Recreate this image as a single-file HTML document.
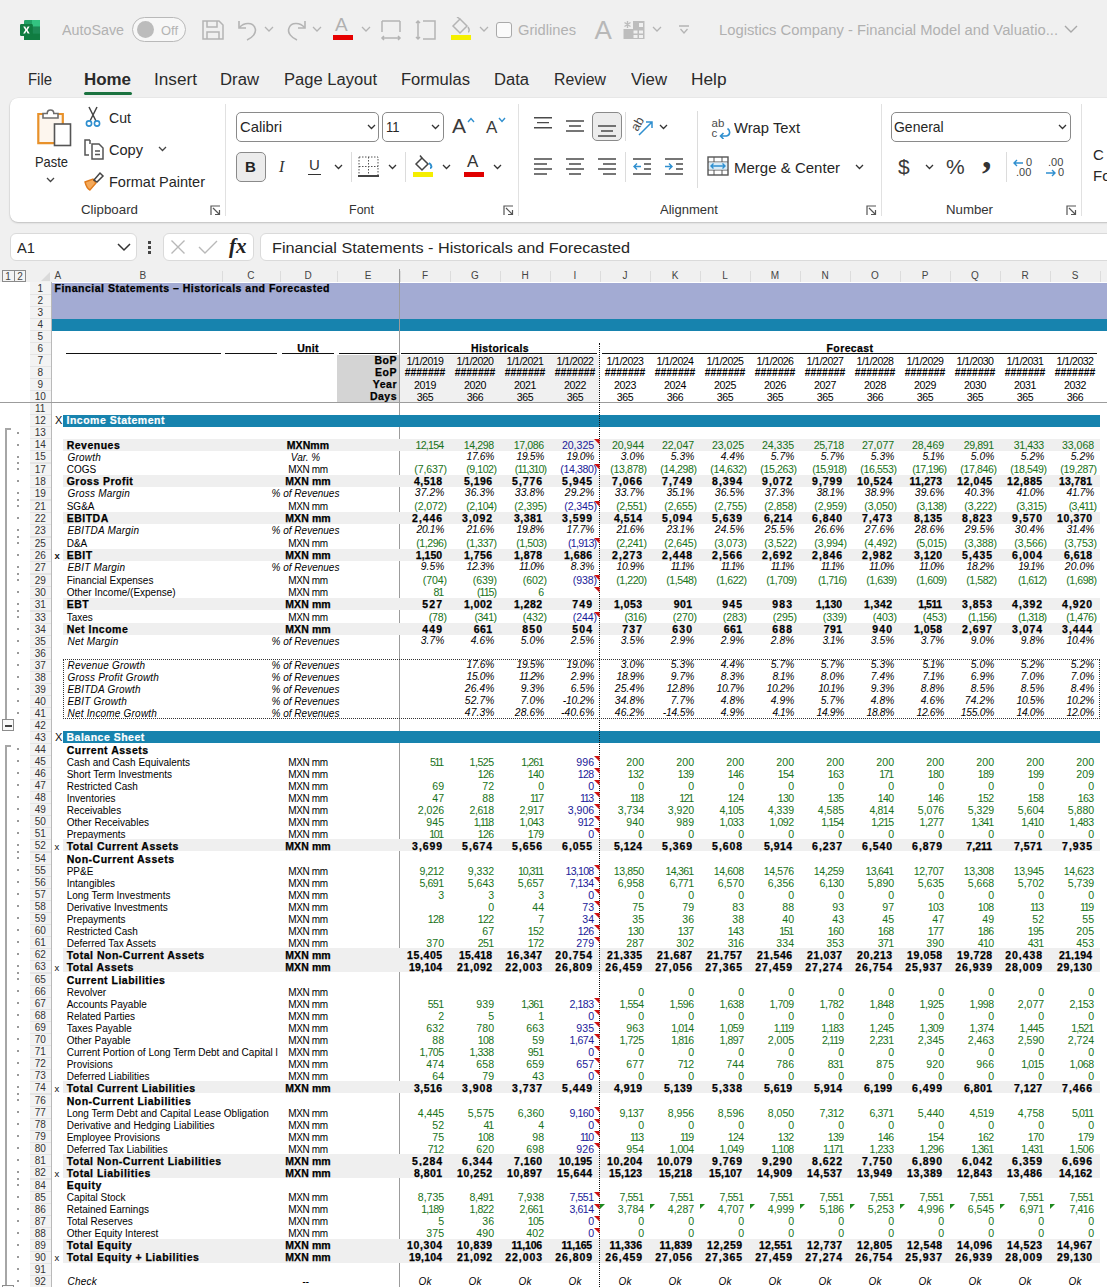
<!DOCTYPE html><html><head><meta charset="utf-8"><style>
html,body{margin:0;padding:0}body{width:1107px;height:1287px;overflow:hidden;position:relative;background:#f0f0f0;font-family:"Liberation Sans",sans-serif}
div,span{box-sizing:border-box}
.x{position:absolute;white-space:nowrap}
.q{position:absolute}
.w{position:absolute;left:0;width:1107px;height:12px}
.w>span{position:absolute;top:0;height:12px;line-height:12px;white-space:nowrap;font-size:9.6px;color:#000}
.w>.R{text-align:right;font-size:10.6px;top:-.5px}
.w>.N{text-align:right;font-size:10.6px;top:-.5px}
.w>.B{text-align:right;font-weight:700;font-size:10.5px;top:-.5px;-webkit-text-stroke:.25px #000}
.w>.I{text-align:right;font-style:italic;font-size:10.3px;top:-.5px}
.w>.C{width:50px;text-align:center;font-style:italic;font-size:10px}
.w>.L{left:66.7px;font-size:10px;top:.5px}
.w>.LB{left:66.7px;font-size:10.5px;font-weight:700;letter-spacing:.5px;top:-.5px;-webkit-text-stroke:.25px #000}
.w>.LI{left:67.5px;font-size:10px;font-style:italic;letter-spacing:.2px;top:.5px}
.w>.U{left:258px;width:100px;text-align:center;font-size:10px;letter-spacing:-.4px;top:.5px}
.w>.UB{left:258px;width:100px;text-align:center;font-size:10.5px;font-weight:700;letter-spacing:.1px;top:-.5px;-webkit-text-stroke:.25px #000}
.w>.UI{left:255.5px;width:100px;text-align:center;font-size:10px;font-style:italic;top:.5px}
.w>.H{left:29.5px;width:21.5px;text-align:center;font-size:10px;color:#333}
.g{color:#187218!important}.u{color:#1a1a98!important}
</style></head><body>
<!-- title bar -->
<svg style="position:absolute;left:18px;top:18px" width="24" height="24" viewBox="0 0 24 24">
 <rect x="6" y="2" width="16" height="20" rx="1.2" fill="#21a366"/>
 <rect x="14" y="2" width="8" height="6.5" fill="#33c481"/>
 <rect x="6" y="15.5" width="16" height="6.5" fill="#107c41"/>
 <rect x="14" y="8.5" width="8" height="7" fill="#185c37" opacity="0.35"/>
 <rect x="2" y="6" width="12.8" height="12" rx="1.2" fill="#107c41"/>
 <path d="M5.2 8.6 L7.2 8.6 L8.4 10.9 L9.7 8.6 L11.6 8.6 L9.5 12 L11.7 15.4 L9.7 15.4 L8.4 13.1 L7.1 15.4 L5.1 15.4 L7.3 12 Z" fill="#fff"/>
</svg>
<div style="position:absolute;left:132px;top:17px;width:54px;height:25px;border:1.3px solid #b9b9b9;border-radius:13px;background:#f7f7f7"></div>
<div style="position:absolute;left:136.5px;top:21.3px;width:17px;height:17px;border-radius:50%;background:#bcbcbc"></div>
<svg style="position:absolute;left:200px;top:18px" width="26" height="24" viewBox="0 0 26 24" fill="none" stroke="#b4b4b4" stroke-width="1.5">
 <path d="M3 3 H19 L23 7 V21 H3 Z"/><path d="M7 3 V9 H17 V3"/><path d="M7 21 V14 H19 V21"/>
</svg>
<svg style="position:absolute;left:236px;top:17px" width="24" height="26" viewBox="0 0 24 26" fill="none" stroke="#b4b4b4" stroke-width="1.6">
 <path d="M3 4 V11 H10"/><path d="M3.5 10.5 C8 5 17 5 19 11 C21 16 16 21 11 23"/>
</svg>
<svg style="position:absolute;left:264px;top:26px" width="10" height="7" fill="none" stroke="#b4b4b4" stroke-width="1.3"><path d="M1 1 L5 5 L9 1"/></svg>
<svg style="position:absolute;left:284px;top:17px" width="24" height="26" viewBox="0 0 24 26" fill="none" stroke="#b4b4b4" stroke-width="1.6">
 <path d="M21 4 V11 H14"/><path d="M20.5 10.5 C16 5 7 5 5 11 C3 16 8 21 13 23"/>
</svg>
<svg style="position:absolute;left:312px;top:26px" width="10" height="7" fill="none" stroke="#b4b4b4" stroke-width="1.3"><path d="M1 1 L5 5 L9 1"/></svg>
<div style="position:absolute;left:333px;top:35px;width:20px;height:5px;background:#e60000"></div>
<svg style="position:absolute;left:361px;top:26px" width="10" height="7" fill="none" stroke="#b4b4b4" stroke-width="1.3"><path d="M1 1 L5 5 L9 1"/></svg>
<svg style="position:absolute;left:380px;top:19px" width="22" height="22" viewBox="0 0 22 22" fill="none" stroke="#b4b4b4" stroke-width="1.5">
 <path d="M2 2 H20 M2 2 V13 M20 2 V13"/><path d="M2 19 H20 M4 17 L2 19 L4 21 M18 17 L20 19 L18 21"/>
</svg>
<svg style="position:absolute;left:415px;top:19px" width="22" height="22" viewBox="0 0 22 22" fill="none" stroke="#b4b4b4" stroke-width="1.5">
 <path d="M8 2 H20 V20 H8"/><path d="M3 2 V20 M1 4 L3 2 L5 4 M1 18 L3 20 L5 18"/>
</svg>
<svg style="position:absolute;left:449px;top:17px" width="24" height="18" viewBox="0 0 24 18" fill="none" stroke="#b4b4b4" stroke-width="1.5">
 <path d="M4 9 L11 2 L18 9 L11 16 Z"/><path d="M11 2 L8 0"/><path d="M19 10 C21 13 20 15 19 15"/>
</svg>
<div style="position:absolute;left:451px;top:35px;width:20px;height:5px;background:#f5f000"></div>
<svg style="position:absolute;left:479px;top:26px" width="10" height="7" fill="none" stroke="#b4b4b4" stroke-width="1.3"><path d="M1 1 L5 5 L9 1"/></svg>
<div style="position:absolute;left:496px;top:22px;width:16px;height:16px;border:1.3px solid #a9a9a9;border-radius:3px;background:#fafafa"></div>
<svg style="position:absolute;left:623px;top:20px" width="22" height="20" viewBox="0 0 22 20">
 <rect x="0.5" y="9" width="21" height="10" fill="#bdbdbd"/><rect x="10" y="1" width="11.5" height="8" fill="#bdbdbd"/>
 <rect x="10.5" y="10.5" width="4" height="3" fill="#f0f0f0"/><rect x="16" y="10.5" width="4" height="3" fill="#f0f0f0"/>
 <rect x="10.5" y="15" width="4" height="3" fill="#f0f0f0"/><rect x="16" y="15" width="4" height="3" fill="#f0f0f0"/>
 <rect x="16" y="3" width="4" height="4" fill="#f0f0f0"/>
 <path d="M4.5 1 V8 M1.5 2.5 L7.5 6.5 M7.5 2.5 L1.5 6.5" stroke="#bdbdbd" stroke-width="1.4"/>
</svg>
<svg style="position:absolute;left:652px;top:26px" width="10" height="7" fill="none" stroke="#b4b4b4" stroke-width="1.3"><path d="M1 1 L5 5 L9 1"/></svg>
<svg style="position:absolute;left:678px;top:25px" width="12" height="10" fill="none" stroke="#b4b4b4" stroke-width="1.3"><path d="M1 1 H11 M2.5 4 L6 8 L9.5 4"/></svg>
<svg style="position:absolute;left:1064px;top:25px" width="14" height="9" fill="none" stroke="#a8a8a8" stroke-width="1.4"><path d="M1 1 L7 7 L13 1"/></svg>

<!-- tabs -->
<div style="position:absolute;left:84px;top:92px;width:48px;height:3px;border-radius:2px;background:#1b7340"></div>

<!-- ribbon panel -->
<div style="position:absolute;left:10px;top:98px;width:1120px;height:124px;background:#fff;border-radius:8px;box-shadow:0 1px 2px rgba(0,0,0,0.18), 0 0 0 0.6px rgba(0,0,0,0.06)"></div>
<!-- clipboard group -->
<svg style="position:absolute;left:34px;top:106px" width="40" height="42" viewBox="0 0 40 42">
 <rect x="4.5" y="8" width="24.5" height="29.5" fill="#fdf6ee"/>
 <path d="M9 8 H4.3 V37.2 H20" fill="none" stroke="#e8912a" stroke-width="2.2"/>
 <path d="M24 8 H28.8 V18" fill="none" stroke="#e8912a" stroke-width="2.2"/>
 <path d="M9 12 V7.5 H13.2 C13.2 2.8 19.8 2.8 19.8 7.5 H24 V12 Z" fill="#fff" stroke="#6d6d6d" stroke-width="1.6"/>
 <rect x="20.5" y="18" width="16" height="21.5" fill="#fff" stroke="#555" stroke-width="1.6"/>
</svg>
<svg style="position:absolute;left:46px;top:177px" width="9" height="6" fill="none" stroke="#444" stroke-width="1.3"><path d="M1 1 L4.5 4.5 L8 1"/></svg>
<svg style="position:absolute;left:84px;top:106px" width="18" height="22" viewBox="0 0 18 22" fill="none">
 <path d="M5 1 L12 15 M13 1 L6 15" stroke="#444" stroke-width="1.5"/>
 <circle cx="5" cy="17.5" r="2.6" stroke="#2f8fcf" stroke-width="1.6"/><circle cx="13" cy="17.5" r="2.6" stroke="#2f8fcf" stroke-width="1.6"/>
</svg>
<svg style="position:absolute;left:83px;top:138px" width="22" height="22" viewBox="0 0 22 22" fill="none" stroke="#555" stroke-width="1.5">
 <path d="M7 2 H2 V17 H6"/><path d="M7 2 V6"/><path d="M9 6 H16 L20 10 V21 H9 Z"/><path d="M12 13 H17 M12 16.5 H17"/>
</svg>
<svg style="position:absolute;left:158px;top:146px" width="9" height="6" fill="none" stroke="#444" stroke-width="1.3"><path d="M1 1 L4.5 4.5 L8 1"/></svg>
<svg style="position:absolute;left:83px;top:170px" width="22" height="22" viewBox="0 0 22 22">
 <path d="M2 12 L10 9 L13 13 L7 20 C5 19 3 16 2 12 Z" fill="#f4a95a" stroke="#e07a1a" stroke-width="1.4"/>
 <path d="M11 10 L17 3 L20 6 L14 12 Z" fill="none" stroke="#444" stroke-width="1.5"/>
</svg>
<svg style="position:absolute;left:210px;top:205px" width="11" height="11" fill="none" stroke="#555" stroke-width="1.2"><path d="M1 10 V1 H10 M3 3 L9.5 9.5 M5 9.5 H9.5 V5"/></svg>
<div style="position:absolute;left:225px;top:104px;width:1px;height:112px;background:#e1e1e1"></div>

<!-- font group -->
<div style="position:absolute;left:236px;top:112px;width:143px;height:30px;border:1px solid #8a8a8a;border-radius:5px;background:#fff"></div>
<svg style="position:absolute;left:367px;top:124px" width="9" height="6" fill="none" stroke="#333" stroke-width="1.3"><path d="M1 1 L4.5 4.5 L8 1"/></svg>
<div style="position:absolute;left:382px;top:112px;width:62px;height:30px;border:1px solid #8a8a8a;border-radius:5px;background:#fff"></div>
<svg style="position:absolute;left:431px;top:124px" width="9" height="6" fill="none" stroke="#333" stroke-width="1.3"><path d="M1 1 L4.5 4.5 L8 1"/></svg>
<svg style="position:absolute;left:467px;top:117px" width="8" height="6" fill="none" stroke="#2f8fcf" stroke-width="1.4"><path d="M1 5 L4 1.5 L7 5"/></svg>
<svg style="position:absolute;left:498px;top:117px" width="8" height="6" fill="none" stroke="#2f8fcf" stroke-width="1.4"><path d="M1 1 L4 4.5 L7 1"/></svg>

<div style="position:absolute;left:236px;top:152px;width:30px;height:30px;border:1px solid #8a8a8a;border-radius:5px;background:#ececec"></div>
<div style="position:absolute;left:308px;top:174px;width:13px;height:1.3px;background:#333"></div>
<svg style="position:absolute;left:334px;top:164px" width="9" height="6" fill="none" stroke="#333" stroke-width="1.3"><path d="M1 1 L4.5 4.5 L8 1"/></svg>
<div style="position:absolute;left:351px;top:152px;width:1px;height:30px;background:#dcdcdc"></div>
<svg style="position:absolute;left:358px;top:156px" width="21" height="21" viewBox="0 0 21 21" fill="none" stroke="#555" stroke-width="1" stroke-dasharray="1.5 1.5">
 <path d="M1 1 H20 V20 M1 1 V20 M10.5 1 V20 M1 10.5 H20"/>
</svg>
<div style="position:absolute;left:358px;top:175px;width:21px;height:2px;background:#444"></div>
<svg style="position:absolute;left:388px;top:164px" width="9" height="6" fill="none" stroke="#333" stroke-width="1.3"><path d="M1 1 L4.5 4.5 L8 1"/></svg>
<div style="position:absolute;left:405px;top:152px;width:1px;height:30px;background:#dcdcdc"></div>
<svg style="position:absolute;left:413px;top:155px" width="22" height="18" viewBox="0 0 22 18" fill="none" stroke="#444" stroke-width="1.5">
 <path d="M3 9 L9 3 L15 9 L9 15 Z"/><path d="M9 3 L7 0.5"/><path d="M16 8 C19 10 19 13 17 13" stroke="#2f8fcf" stroke-width="2"/>
</svg>
<div style="position:absolute;left:413px;top:172px;width:20px;height:5px;background:#f5ee00"></div>
<svg style="position:absolute;left:442px;top:164px" width="9" height="6" fill="none" stroke="#333" stroke-width="1.3"><path d="M1 1 L4.5 4.5 L8 1"/></svg>
<div style="position:absolute;left:464px;top:172px;width:20px;height:5px;background:#e00000"></div>
<svg style="position:absolute;left:493px;top:164px" width="9" height="6" fill="none" stroke="#333" stroke-width="1.3"><path d="M1 1 L4.5 4.5 L8 1"/></svg>
<svg style="position:absolute;left:503px;top:205px" width="11" height="11" fill="none" stroke="#555" stroke-width="1.2"><path d="M1 10 V1 H10 M3 3 L9.5 9.5 M5 9.5 H9.5 V5"/></svg>
<div style="position:absolute;left:518px;top:104px;width:1px;height:112px;background:#e1e1e1"></div>

<!-- alignment group -->
<svg style="position:absolute;left:533px;top:116px" width="20" height="14" fill="none" stroke="#4a4a4a" stroke-width="1.4"><path d="M1 1.7 H19 M4 6.6 H16 M1 11.7 H19"/></svg>
<svg style="position:absolute;left:565px;top:120px" width="20" height="14" fill="none" stroke="#4a4a4a" stroke-width="1.4"><path d="M1 1 H19 M4 6 H16 M1 11 H19"/></svg>
<div style="position:absolute;left:592px;top:112px;width:30px;height:29px;border:1px solid #8a8a8a;border-radius:5px;background:#ececec"></div>
<svg style="position:absolute;left:597px;top:125px" width="20" height="14" fill="none" stroke="#4a4a4a" stroke-width="1.4"><path d="M1 1 H19 M4 6 H16 M1 11 H19"/></svg>
<div style="position:absolute;left:624.5px;top:112px;width:1px;height:29px;background:#dcdcdc"></div>
<svg style="position:absolute;left:630px;top:112px" width="26" height="26" viewBox="0 0 26 26" fill="none">
 <text x="0" y="0" font-size="12.5" fill="#444" font-family="Liberation Sans" transform="translate(7.5 20) rotate(-60)">ab</text>
 <path d="M9 23 L22 10 M16 10 H22 V16" stroke="#2f8fcf" stroke-width="1.5"/>
</svg>
<svg style="position:absolute;left:659px;top:124px" width="9" height="6" fill="none" stroke="#333" stroke-width="1.3"><path d="M1 1 L4.5 4.5 L8 1"/></svg>
<svg style="position:absolute;left:533px;top:158px" width="20" height="18" fill="none" stroke="#4a4a4a" stroke-width="1.4"><path d="M1 1 H19 M1 6 H14 M1 11 H19 M1 16 H14"/></svg>
<svg style="position:absolute;left:565px;top:158px" width="20" height="18" fill="none" stroke="#4a4a4a" stroke-width="1.4"><path d="M1 1 H19 M4 6 H16 M1 11 H19 M4 16 H16"/></svg>
<svg style="position:absolute;left:597px;top:158px" width="20" height="18" fill="none" stroke="#4a4a4a" stroke-width="1.4"><path d="M1 1 H19 M6 6 H19 M1 11 H19 M6 16 H19"/></svg>
<div style="position:absolute;left:624.5px;top:152px;width:1px;height:30px;background:#dcdcdc"></div>
<svg style="position:absolute;left:632px;top:158px" width="20" height="18" fill="none" stroke="#4a4a4a" stroke-width="1.4"><path d="M1 1 H19 M12 6 H19 M12 11 H19 M1 16 H19"/><path d="M9 8.5 H2 M5 5.5 L2 8.5 L5 11.5" stroke="#2f8fcf"/></svg>
<svg style="position:absolute;left:664px;top:158px" width="20" height="18" fill="none" stroke="#4a4a4a" stroke-width="1.4"><path d="M1 1 H19 M12 6 H19 M12 11 H19 M1 16 H19"/><path d="M1 8.5 H8 M5 5.5 L8 8.5 L5 11.5" stroke="#2f8fcf"/></svg>
<div style="position:absolute;left:696.5px;top:111px;width:1px;height:77px;background:#dcdcdc"></div>
<svg style="position:absolute;left:709px;top:115px" width="24" height="24" viewBox="0 0 24 24" fill="none">
 <text x="2.5" y="12" font-size="11.5" fill="#4a4a4a" font-family="Liberation Sans">ab</text>
 <text x="2.5" y="21.5" font-size="11.5" fill="#4a4a4a" font-family="Liberation Sans">c</text>
 <path d="M18.5 13.5 C21.5 15.5 21.5 20 17.5 21 H11.5 M14.5 18 L11.5 21 L14.5 24" stroke="#2f8fcf" stroke-width="1.6"/>
</svg>
<svg style="position:absolute;left:707px;top:156px" width="22" height="20" viewBox="0 0 22 20" fill="none">
 <rect x="1" y="1" width="20" height="18" stroke="#555" stroke-width="1.4"/>
 <path d="M1 6 H21 M1 14 H21 M7 1 V6 M15 1 V6 M7 14 V19 M15 14 V19" stroke="#555" stroke-width="1"/>
 <rect x="2" y="6.5" width="18" height="7" fill="#d9ecf8"/>
 <path d="M4 10 H18 M6.5 7.5 L4 10 L6.5 12.5 M15.5 7.5 L18 10 L15.5 12.5" stroke="#2f8fcf" stroke-width="1.4"/>
</svg>
<svg style="position:absolute;left:855px;top:164px" width="9" height="6" fill="none" stroke="#333" stroke-width="1.3"><path d="M1 1 L4.5 4.5 L8 1"/></svg>
<svg style="position:absolute;left:866px;top:205px" width="11" height="11" fill="none" stroke="#555" stroke-width="1.2"><path d="M1 10 V1 H10 M3 3 L9.5 9.5 M5 9.5 H9.5 V5"/></svg>
<div style="position:absolute;left:881px;top:104px;width:1px;height:112px;background:#e1e1e1"></div>

<!-- number group -->
<div style="position:absolute;left:891px;top:112px;width:180px;height:30px;border:1px solid #8a8a8a;border-radius:5px;background:#fff"></div>
<svg style="position:absolute;left:1058px;top:124px" width="9" height="6" fill="none" stroke="#333" stroke-width="1.3"><path d="M1 1 L4.5 4.5 L8 1"/></svg>
<svg style="position:absolute;left:925px;top:164px" width="9" height="6" fill="none" stroke="#333" stroke-width="1.3"><path d="M1 1 L4.5 4.5 L8 1"/></svg>
<div style="position:absolute;left:1006px;top:152px;width:1px;height:30px;background:#dcdcdc"></div>
<svg style="position:absolute;left:1013px;top:159px" width="11" height="8" fill="none" stroke="#2f8fcf" stroke-width="1.4"><path d="M10 4 H1 M4 1 L1 4 L4 7"/></svg>
<svg style="position:absolute;left:1045px;top:169px" width="11" height="8" fill="none" stroke="#2f8fcf" stroke-width="1.4"><path d="M1 4 H10 M7 1 L10 4 L7 7"/></svg>
<svg style="position:absolute;left:1066px;top:205px" width="11" height="11" fill="none" stroke="#555" stroke-width="1.2"><path d="M1 10 V1 H10 M3 3 L9.5 9.5 M5 9.5 H9.5 V5"/></svg>
<div style="position:absolute;left:1081px;top:104px;width:1px;height:112px;background:#e1e1e1"></div>

<!-- formula bar -->
<div style="position:absolute;left:10px;top:232.5px;width:126.5px;height:28.5px;border:1px solid #dadada;border-radius:6px;background:#fff"></div>
<svg style="position:absolute;left:117px;top:243px" width="14" height="9" fill="none" stroke="#333" stroke-width="1.5"><path d="M1 1 L7 7 L13 1"/></svg>
<div style="position:absolute;left:148px;top:241px;width:2.5px;height:2.5px;background:#444"></div>
<div style="position:absolute;left:148px;top:246px;width:2.5px;height:2.5px;background:#444"></div>
<div style="position:absolute;left:148px;top:251px;width:2.5px;height:2.5px;background:#444"></div>
<div style="position:absolute;left:162.5px;top:232.5px;width:91px;height:28.5px;border:1px solid #dadada;border-radius:6px;background:#fff"></div>
<svg style="position:absolute;left:170px;top:239px" width="16" height="16" fill="none" stroke="#b8b8b8" stroke-width="1.4"><path d="M1.5 1.5 L14.5 14.5 M14.5 1.5 L1.5 14.5"/></svg>
<svg style="position:absolute;left:198px;top:239px" width="20" height="16" fill="none" stroke="#b8b8b8" stroke-width="1.4"><path d="M1 8 L7 14 L19 2"/></svg>
<div style="position:absolute;left:260px;top:232.5px;width:860px;height:28.5px;border:1px solid #dadada;border-radius:6px;background:#fff"></div>

<div class="x" style="left:62px;top:20px;font-size:15.5px;line-height:20px;color:#b2b2b2;transform-origin:0 0;transform:scaleX(0.9224);">AutoSave</div>
<div class="x" style="left:160.8px;top:21px;font-size:13px;line-height:20px;color:#b4b4b4;transform-origin:0 0;transform:scaleX(0.9936);">Off</div>
<div class="x" style="left:518px;top:20px;font-size:15.5px;line-height:20px;color:#b2b2b2;transform-origin:0 0;transform:scaleX(0.9481);">Gridlines</div>
<div class="x" style="left:719px;top:20px;font-size:15.5px;line-height:20px;color:#b0b0b0;transform-origin:0 0;transform:scaleX(0.9535);">Logistics Company - Financial Model and Valuatio...</div>
<div class="x" style="left:27.5px;top:70px;font-size:16px;line-height:20px;color:#2a2a2a;transform-origin:0 0;transform:scaleX(0.9309);">File</div>
<div class="x" style="left:84px;top:70px;font-size:16px;line-height:20px;color:#2a2a2a;font-weight:700;transform-origin:0 0;transform:scaleX(1.0573);">Home</div>
<div class="x" style="left:154px;top:70px;font-size:16px;line-height:20px;color:#2a2a2a;transform-origin:0 0;transform:scaleX(1.0746);">Insert</div>
<div class="x" style="left:220px;top:70px;font-size:16px;line-height:20px;color:#2a2a2a;transform-origin:0 0;transform:scaleX(1.0444);">Draw</div>
<div class="x" style="left:284px;top:70px;font-size:16px;line-height:20px;color:#2a2a2a;transform-origin:0 0;transform:scaleX(1.0350);">Page Layout</div>
<div class="x" style="left:401px;top:70px;font-size:16px;line-height:20px;color:#2a2a2a;transform-origin:0 0;transform:scaleX(1.0347);">Formulas</div>
<div class="x" style="left:494px;top:70px;font-size:16px;line-height:20px;color:#2a2a2a;transform-origin:0 0;transform:scaleX(1.0356);">Data</div>
<div class="x" style="left:554px;top:70px;font-size:16px;line-height:20px;color:#2a2a2a;transform-origin:0 0;transform:scaleX(0.9911);">Review</div>
<div class="x" style="left:631px;top:70px;font-size:16px;line-height:20px;color:#2a2a2a;transform-origin:0 0;transform:scaleX(1.0468);">View</div>
<div class="x" style="left:691px;top:70px;font-size:16px;line-height:20px;color:#2a2a2a;transform-origin:0 0;transform:scaleX(1.0788);">Help</div>
<div class="x" style="left:35px;top:152px;font-size:15px;line-height:20px;color:#262626;transform-origin:0 0;transform:scaleX(0.8603);">Paste</div>
<div class="x" style="left:109px;top:108px;font-size:15px;line-height:20px;color:#262626;transform-origin:0 0;transform:scaleX(0.9424);">Cut</div>
<div class="x" style="left:109px;top:140px;font-size:15px;line-height:20px;color:#262626;transform-origin:0 0;transform:scaleX(0.9706);">Copy</div>
<div class="x" style="left:109px;top:172px;font-size:15px;line-height:20px;color:#262626;transform-origin:0 0;transform:scaleX(0.9677);">Format Painter</div>
<div class="x" style="left:81px;top:200px;font-size:13.5px;line-height:20px;color:#333;transform-origin:0 0;transform:scaleX(0.9862);">Clipboard</div>
<div class="x" style="left:239.5px;top:117px;font-size:15px;line-height:20px;color:#262626;transform-origin:0 0;transform:scaleX(0.9879);">Calibri</div>
<div class="x" style="left:386px;top:117px;font-size:15px;line-height:20px;color:#262626;transform-origin:0 0;transform:scaleX(0.8666);">11</div>
<div class="x" style="left:349px;top:200px;font-size:13.5px;line-height:20px;color:#333;transform-origin:0 0;transform:scaleX(0.9254);">Font</div>
<div class="x" style="left:734px;top:118px;font-size:15px;line-height:20px;color:#262626;transform-origin:0 0;transform:scaleX(0.9853);">Wrap Text</div>
<div class="x" style="left:734px;top:158px;font-size:15px;line-height:20px;color:#262626;transform-origin:0 0;transform:scaleX(1.0010);">Merge &amp; Center</div>
<div class="x" style="left:660px;top:200px;font-size:13.5px;line-height:20px;color:#333;transform-origin:0 0;transform:scaleX(0.9659);">Alignment</div>
<div class="x" style="left:894.2px;top:117px;font-size:15px;line-height:20px;color:#262626;transform-origin:0 0;transform:scaleX(0.9311);">General</div>
<div class="x" style="left:946px;top:200px;font-size:13.5px;line-height:20px;color:#333;transform-origin:0 0;transform:scaleX(0.9788);">Number</div>
<div class="x" style="left:17px;top:238px;font-size:15px;line-height:20px;color:#262626;transform-origin:0 0;transform:scaleX(0.9804);">A1</div>
<div class="x" style="left:272px;top:238px;font-size:15px;line-height:20px;color:#262626;transform-origin:0 0;transform:scaleX(1.0816);">Financial Statements - Historicals and Forecasted</div>
<div class="x" style="left:1093px;top:145px;font-size:15px;line-height:20px;color:#262626;">C</div>
<div class="x" style="left:1093px;top:166px;font-size:15px;line-height:20px;color:#262626;">Fo</div>
<div class="x" style="left:335px;top:15px;font-size:19px;line-height:20px;color:#b0b0b0;">A</div>
<div class="x" style="left:594.5px;top:19.5px;font-size:26px;line-height:20px;color:#b8b8b8;">A</div>
<div class="x" style="left:452px;top:116px;font-size:21px;line-height:20px;color:#3a3a3a;">A</div>
<div class="x" style="left:486px;top:118px;font-size:17px;line-height:20px;color:#3a3a3a;">A</div>
<div class="x" style="left:245px;top:157px;font-size:15px;line-height:20px;color:#242424;font-weight:700;">B</div>
<div class="x" style="left:279px;top:157px;font-size:16px;line-height:20px;color:#333;font-family:'Liberation Serif',serif;font-style:italic;">I</div>
<div class="x" style="left:309px;top:155px;font-size:15px;line-height:20px;color:#333;">U</div>
<div class="x" style="left:467px;top:152px;font-size:17px;line-height:20px;color:#333;">A</div>
<div class="x" style="left:898px;top:157px;font-size:21px;line-height:20px;color:#3a3a3a;">$</div>
<div class="x" style="left:946px;top:157px;font-size:21px;line-height:20px;color:#3a3a3a;">%</div>
<div class="x" style="left:982px;top:140px;font-size:38px;line-height:20px;color:#333;font-weight:700;font-family:'Liberation Serif',serif;line-height:30px;">,</div>
<div class="x" style="left:1026px;top:157px;font-size:11px;line-height:20px;color:#444;line-height:10px;">0</div>
<div class="x" style="left:1016px;top:167px;font-size:11px;line-height:20px;color:#444;line-height:10px;">.00</div>
<div class="x" style="left:1048px;top:157px;font-size:11px;line-height:20px;color:#444;line-height:10px;">.00</div>
<div class="x" style="left:1058px;top:167px;font-size:11px;line-height:20px;color:#444;line-height:10px;">0</div>
<div class="x" style="left:229px;top:236px;font-size:21px;line-height:20px;color:#222;font-style:italic;font-weight:700;font-family:'Liberation Serif',serif;">fx</div>
<div class="q" style="left:0px;top:282px;width:29.5px;height:1005px;background:#ffffff"></div>
<div class="q" style="left:29.5px;top:282px;width:21.5px;height:1005px;background:#f3f3f3"></div>
<div class="q" style="left:51px;top:282px;width:1056px;height:1005px;background:#ffffff"></div>
<div class="q" style="left:50.5px;top:269px;width:1.0px;height:1018px;background:#b9b9b9"></div>
<div class="q" style="left:29.5px;top:269px;width:1077.5px;height:13px;background:#f0f0f0"></div>
<div class="x" style="left:-42.25px;top:270px;width:200px;text-align:center;line-height:12px;font-size:10px;color:#444">A</div>
<div class="x" style="left:42.75px;top:270px;width:200px;text-align:center;line-height:12px;font-size:10px;color:#444">B</div>
<div class="q" style="left:222px;top:271px;width:1px;height:11px;background:#dcdcdc"></div>
<div class="x" style="left:150.75px;top:270px;width:200px;text-align:center;line-height:12px;font-size:10px;color:#444">C</div>
<div class="q" style="left:279.5px;top:271px;width:1.0px;height:11px;background:#dcdcdc"></div>
<div class="x" style="left:208.0px;top:270px;width:200px;text-align:center;line-height:12px;font-size:10px;color:#444">D</div>
<div class="q" style="left:336.5px;top:271px;width:1.0px;height:11px;background:#dcdcdc"></div>
<div class="x" style="left:268.0px;top:270px;width:200px;text-align:center;line-height:12px;font-size:10px;color:#444">E</div>
<div class="q" style="left:399.5px;top:271px;width:1.0px;height:11px;background:#dcdcdc"></div>
<div class="x" style="left:325.0px;top:270px;width:200px;text-align:center;line-height:12px;font-size:10px;color:#444">F</div>
<div class="q" style="left:450px;top:271px;width:1px;height:11px;background:#dcdcdc"></div>
<div class="x" style="left:375.0px;top:270px;width:200px;text-align:center;line-height:12px;font-size:10px;color:#444">G</div>
<div class="q" style="left:500px;top:271px;width:1px;height:11px;background:#dcdcdc"></div>
<div class="x" style="left:425.0px;top:270px;width:200px;text-align:center;line-height:12px;font-size:10px;color:#444">H</div>
<div class="q" style="left:550px;top:271px;width:1px;height:11px;background:#dcdcdc"></div>
<div class="x" style="left:475.0px;top:270px;width:200px;text-align:center;line-height:12px;font-size:10px;color:#444">I</div>
<div class="q" style="left:600px;top:271px;width:1px;height:11px;background:#dcdcdc"></div>
<div class="x" style="left:525.0px;top:270px;width:200px;text-align:center;line-height:12px;font-size:10px;color:#444">J</div>
<div class="q" style="left:650px;top:271px;width:1px;height:11px;background:#dcdcdc"></div>
<div class="x" style="left:575.0px;top:270px;width:200px;text-align:center;line-height:12px;font-size:10px;color:#444">K</div>
<div class="q" style="left:700px;top:271px;width:1px;height:11px;background:#dcdcdc"></div>
<div class="x" style="left:625.0px;top:270px;width:200px;text-align:center;line-height:12px;font-size:10px;color:#444">L</div>
<div class="q" style="left:750px;top:271px;width:1px;height:11px;background:#dcdcdc"></div>
<div class="x" style="left:675.0px;top:270px;width:200px;text-align:center;line-height:12px;font-size:10px;color:#444">M</div>
<div class="q" style="left:800px;top:271px;width:1px;height:11px;background:#dcdcdc"></div>
<div class="x" style="left:725.0px;top:270px;width:200px;text-align:center;line-height:12px;font-size:10px;color:#444">N</div>
<div class="q" style="left:850px;top:271px;width:1px;height:11px;background:#dcdcdc"></div>
<div class="x" style="left:775.0px;top:270px;width:200px;text-align:center;line-height:12px;font-size:10px;color:#444">O</div>
<div class="q" style="left:900px;top:271px;width:1px;height:11px;background:#dcdcdc"></div>
<div class="x" style="left:825.0px;top:270px;width:200px;text-align:center;line-height:12px;font-size:10px;color:#444">P</div>
<div class="q" style="left:950px;top:271px;width:1px;height:11px;background:#dcdcdc"></div>
<div class="x" style="left:875.0px;top:270px;width:200px;text-align:center;line-height:12px;font-size:10px;color:#444">Q</div>
<div class="q" style="left:1000px;top:271px;width:1px;height:11px;background:#dcdcdc"></div>
<div class="x" style="left:925.0px;top:270px;width:200px;text-align:center;line-height:12px;font-size:10px;color:#444">R</div>
<div class="q" style="left:1050px;top:271px;width:1px;height:11px;background:#dcdcdc"></div>
<div class="x" style="left:975.0px;top:270px;width:200px;text-align:center;line-height:12px;font-size:10px;color:#444">S</div>
<div class="q" style="left:1100px;top:271px;width:1px;height:11px;background:#dcdcdc"></div>
<div class="x" style="left:1025.0px;top:270px;width:200px;text-align:center;line-height:12px;font-size:10px;color:#444">T</div>
<svg style="position:absolute;left:40px;top:271px" width="11" height="11"><path d="M10 1 L10 10 L1 10 Z" fill="#dadada"/></svg>
<div class="q" style="left:2px;top:270px;width:24px;height:12px;border:1px solid #8a8a8a;background:#f4f4f4"></div>
<div class="q" style="left:13.5px;top:270px;width:1.0px;height:12px;background:#8a8a8a"></div>
<div class="x" style="left:3.0px;top:270.5px;width:10px;text-align:center;line-height:12px;font-size:10px;color:#444">1</div>
<div class="x" style="left:15.0px;top:270.5px;width:10px;text-align:center;line-height:12px;font-size:10px;color:#444">2</div>
<div class="q" style="left:51.5px;top:282.5px;width:1055.5px;height:36.0px;background:#a3abd3"></div>
<div class="q" style="left:51.5px;top:318.5px;width:1055.5px;height:12.0px;background:#1783ae"></div>
<div class="x" style="left:54.5px;top:282.0px;line-height:12px;font-size:10.5px;font-weight:700;letter-spacing:.5px;-webkit-text-stroke:.25px #000">Financial Statements – Historicals and Forecasted</div>
<div class="q" style="left:29.5px;top:294.0px;width:21.0px;height:1.0px;background:#e4e4e4"></div>
<div class="x" style="left:29.25px;top:283.0px;width:22px;text-align:center;line-height:12px;font-size:10px;color:#333">1</div>
<div class="q" style="left:29.5px;top:306.0px;width:21.0px;height:1.0px;background:#e4e4e4"></div>
<div class="x" style="left:29.25px;top:295.0px;width:22px;text-align:center;line-height:12px;font-size:10px;color:#333">2</div>
<div class="q" style="left:29.5px;top:318.0px;width:21.0px;height:1.0px;background:#e4e4e4"></div>
<div class="x" style="left:29.25px;top:307.0px;width:22px;text-align:center;line-height:12px;font-size:10px;color:#333">3</div>
<div class="q" style="left:29.5px;top:330.0px;width:21.0px;height:1.0px;background:#e4e4e4"></div>
<div class="x" style="left:29.25px;top:319.0px;width:22px;text-align:center;line-height:12px;font-size:10px;color:#333">4</div>
<div class="q" style="left:29.5px;top:342.0px;width:21.0px;height:1.0px;background:#e4e4e4"></div>
<div class="x" style="left:29.25px;top:331.0px;width:22px;text-align:center;line-height:12px;font-size:10px;color:#333">5</div>
<div class="q" style="left:29.5px;top:354.0px;width:21.0px;height:1.0px;background:#e4e4e4"></div>
<div class="x" style="left:29.25px;top:343.0px;width:22px;text-align:center;line-height:12px;font-size:10px;color:#333">6</div>
<div class="q" style="left:29.5px;top:366.0px;width:21.0px;height:1.0px;background:#e4e4e4"></div>
<div class="x" style="left:29.25px;top:355.0px;width:22px;text-align:center;line-height:12px;font-size:10px;color:#333">7</div>
<div class="q" style="left:29.5px;top:378.0px;width:21.0px;height:1.0px;background:#e4e4e4"></div>
<div class="x" style="left:29.25px;top:367.0px;width:22px;text-align:center;line-height:12px;font-size:10px;color:#333">8</div>
<div class="q" style="left:29.5px;top:390.0px;width:21.0px;height:1.0px;background:#e4e4e4"></div>
<div class="x" style="left:29.25px;top:379.0px;width:22px;text-align:center;line-height:12px;font-size:10px;color:#333">9</div>
<div class="q" style="left:29.5px;top:402.0px;width:21.0px;height:1.0px;background:#e4e4e4"></div>
<div class="x" style="left:29.25px;top:391.0px;width:22px;text-align:center;line-height:12px;font-size:10px;color:#333">10</div>
<div class="q" style="left:29.5px;top:414.0px;width:21.0px;height:1.0px;background:#e4e4e4"></div>
<div class="x" style="left:29.25px;top:403.0px;width:22px;text-align:center;line-height:12px;font-size:10px;color:#333">11</div>
<div class="q" style="left:29.5px;top:426.0px;width:21.0px;height:1.0px;background:#e4e4e4"></div>
<div class="x" style="left:29.25px;top:415.0px;width:22px;text-align:center;line-height:12px;font-size:10px;color:#333">12</div>
<div class="q" style="left:29.5px;top:438.0px;width:21.0px;height:1.0px;background:#e4e4e4"></div>
<div class="x" style="left:29.25px;top:427.0px;width:22px;text-align:center;line-height:12px;font-size:10px;color:#333">13</div>
<div class="q" style="left:29.5px;top:450.0px;width:21.0px;height:1.0px;background:#e4e4e4"></div>
<div class="x" style="left:29.25px;top:439.0px;width:22px;text-align:center;line-height:12px;font-size:10px;color:#333">14</div>
<div class="q" style="left:29.5px;top:462.0px;width:21.0px;height:1.0px;background:#e4e4e4"></div>
<div class="x" style="left:29.25px;top:451.0px;width:22px;text-align:center;line-height:12px;font-size:10px;color:#333">15</div>
<div class="q" style="left:29.5px;top:462.92px;width:21.0px;height:1.0px;background:#e4e4e4"></div>
<div class="q" style="left:29.5px;top:474.92px;width:21.0px;height:1.0px;background:#e4e4e4"></div>
<div class="x" style="left:29.25px;top:463.92px;width:22px;text-align:center;line-height:12px;font-size:10px;color:#333">17</div>
<div class="q" style="left:29.5px;top:486.92px;width:21.0px;height:1.0px;background:#e4e4e4"></div>
<div class="x" style="left:29.25px;top:475.92px;width:22px;text-align:center;line-height:12px;font-size:10px;color:#333">18</div>
<div class="q" style="left:29.5px;top:498.92px;width:21.0px;height:1.0px;background:#e4e4e4"></div>
<div class="x" style="left:29.25px;top:487.92px;width:22px;text-align:center;line-height:12px;font-size:10px;color:#333">19</div>
<div class="q" style="left:29.5px;top:499.84px;width:21.0px;height:1.0px;background:#e4e4e4"></div>
<div class="q" style="left:29.5px;top:511.84000000000003px;width:21.0px;height:1.0px;background:#e4e4e4"></div>
<div class="x" style="left:29.25px;top:500.84px;width:22px;text-align:center;line-height:12px;font-size:10px;color:#333">21</div>
<div class="q" style="left:29.5px;top:523.84px;width:21.0px;height:1.0px;background:#e4e4e4"></div>
<div class="x" style="left:29.25px;top:512.84px;width:22px;text-align:center;line-height:12px;font-size:10px;color:#333">22</div>
<div class="q" style="left:29.5px;top:535.84px;width:21.0px;height:1.0px;background:#e4e4e4"></div>
<div class="x" style="left:29.25px;top:524.84px;width:22px;text-align:center;line-height:12px;font-size:10px;color:#333">23</div>
<div class="q" style="left:29.5px;top:536.76px;width:21.0px;height:1.0px;background:#e4e4e4"></div>
<div class="q" style="left:29.5px;top:548.76px;width:21.0px;height:1.0px;background:#e4e4e4"></div>
<div class="x" style="left:29.25px;top:537.76px;width:22px;text-align:center;line-height:12px;font-size:10px;color:#333">25</div>
<div class="q" style="left:29.5px;top:560.76px;width:21.0px;height:1.0px;background:#e4e4e4"></div>
<div class="x" style="left:29.25px;top:549.76px;width:22px;text-align:center;line-height:12px;font-size:10px;color:#333">26</div>
<div class="q" style="left:29.5px;top:572.76px;width:21.0px;height:1.0px;background:#e4e4e4"></div>
<div class="x" style="left:29.25px;top:561.76px;width:22px;text-align:center;line-height:12px;font-size:10px;color:#333">27</div>
<div class="q" style="left:29.5px;top:573.68px;width:21.0px;height:1.0px;background:#e4e4e4"></div>
<div class="q" style="left:29.5px;top:585.68px;width:21.0px;height:1.0px;background:#e4e4e4"></div>
<div class="x" style="left:29.25px;top:574.68px;width:22px;text-align:center;line-height:12px;font-size:10px;color:#333">29</div>
<div class="q" style="left:29.5px;top:597.68px;width:21.0px;height:1.0px;background:#e4e4e4"></div>
<div class="x" style="left:29.25px;top:586.68px;width:22px;text-align:center;line-height:12px;font-size:10px;color:#333">30</div>
<div class="q" style="left:29.5px;top:609.68px;width:21.0px;height:1.0px;background:#e4e4e4"></div>
<div class="x" style="left:29.25px;top:598.68px;width:22px;text-align:center;line-height:12px;font-size:10px;color:#333">31</div>
<div class="q" style="left:29.5px;top:610.6px;width:21.0px;height:1.0px;background:#e4e4e4"></div>
<div class="q" style="left:29.5px;top:622.6px;width:21.0px;height:1.0px;background:#e4e4e4"></div>
<div class="x" style="left:29.25px;top:611.6px;width:22px;text-align:center;line-height:12px;font-size:10px;color:#333">33</div>
<div class="q" style="left:29.5px;top:634.6px;width:21.0px;height:1.0px;background:#e4e4e4"></div>
<div class="x" style="left:29.25px;top:623.6px;width:22px;text-align:center;line-height:12px;font-size:10px;color:#333">34</div>
<div class="q" style="left:29.5px;top:646.6px;width:21.0px;height:1.0px;background:#e4e4e4"></div>
<div class="x" style="left:29.25px;top:635.6px;width:22px;text-align:center;line-height:12px;font-size:10px;color:#333">35</div>
<div class="q" style="left:29.5px;top:658.6px;width:21.0px;height:1.0px;background:#e4e4e4"></div>
<div class="x" style="left:29.25px;top:647.6px;width:22px;text-align:center;line-height:12px;font-size:10px;color:#333">36</div>
<div class="q" style="left:29.5px;top:670.6px;width:21.0px;height:1.0px;background:#e4e4e4"></div>
<div class="x" style="left:29.25px;top:659.6px;width:22px;text-align:center;line-height:12px;font-size:10px;color:#333">37</div>
<div class="q" style="left:29.5px;top:682.6px;width:21.0px;height:1.0px;background:#e4e4e4"></div>
<div class="x" style="left:29.25px;top:671.6px;width:22px;text-align:center;line-height:12px;font-size:10px;color:#333">38</div>
<div class="q" style="left:29.5px;top:694.6px;width:21.0px;height:1.0px;background:#e4e4e4"></div>
<div class="x" style="left:29.25px;top:683.6px;width:22px;text-align:center;line-height:12px;font-size:10px;color:#333">39</div>
<div class="q" style="left:29.5px;top:706.6px;width:21.0px;height:1.0px;background:#e4e4e4"></div>
<div class="x" style="left:29.25px;top:695.6px;width:22px;text-align:center;line-height:12px;font-size:10px;color:#333">40</div>
<div class="q" style="left:29.5px;top:718.6px;width:21.0px;height:1.0px;background:#e4e4e4"></div>
<div class="x" style="left:29.25px;top:707.6px;width:22px;text-align:center;line-height:12px;font-size:10px;color:#333">41</div>
<div class="q" style="left:29.5px;top:730.6px;width:21.0px;height:1.0px;background:#e4e4e4"></div>
<div class="x" style="left:29.25px;top:719.6px;width:22px;text-align:center;line-height:12px;font-size:10px;color:#333">42</div>
<div class="q" style="left:29.5px;top:742.6px;width:21.0px;height:1.0px;background:#e4e4e4"></div>
<div class="x" style="left:29.25px;top:731.6px;width:22px;text-align:center;line-height:12px;font-size:10px;color:#333">43</div>
<div class="q" style="left:29.5px;top:754.6px;width:21.0px;height:1.0px;background:#e4e4e4"></div>
<div class="x" style="left:29.25px;top:743.6px;width:22px;text-align:center;line-height:12px;font-size:10px;color:#333">44</div>
<div class="q" style="left:29.5px;top:766.6px;width:21.0px;height:1.0px;background:#e4e4e4"></div>
<div class="x" style="left:29.25px;top:755.6px;width:22px;text-align:center;line-height:12px;font-size:10px;color:#333">45</div>
<div class="q" style="left:29.5px;top:778.6px;width:21.0px;height:1.0px;background:#e4e4e4"></div>
<div class="x" style="left:29.25px;top:767.6px;width:22px;text-align:center;line-height:12px;font-size:10px;color:#333">46</div>
<div class="q" style="left:29.5px;top:790.6px;width:21.0px;height:1.0px;background:#e4e4e4"></div>
<div class="x" style="left:29.25px;top:779.6px;width:22px;text-align:center;line-height:12px;font-size:10px;color:#333">47</div>
<div class="q" style="left:29.5px;top:802.6px;width:21.0px;height:1.0px;background:#e4e4e4"></div>
<div class="x" style="left:29.25px;top:791.6px;width:22px;text-align:center;line-height:12px;font-size:10px;color:#333">48</div>
<div class="q" style="left:29.5px;top:814.6px;width:21.0px;height:1.0px;background:#e4e4e4"></div>
<div class="x" style="left:29.25px;top:803.6px;width:22px;text-align:center;line-height:12px;font-size:10px;color:#333">49</div>
<div class="q" style="left:29.5px;top:826.6px;width:21.0px;height:1.0px;background:#e4e4e4"></div>
<div class="x" style="left:29.25px;top:815.6px;width:22px;text-align:center;line-height:12px;font-size:10px;color:#333">50</div>
<div class="q" style="left:29.5px;top:838.6px;width:21.0px;height:1.0px;background:#e4e4e4"></div>
<div class="x" style="left:29.25px;top:827.6px;width:22px;text-align:center;line-height:12px;font-size:10px;color:#333">51</div>
<div class="q" style="left:29.5px;top:850.6px;width:21.0px;height:1.0px;background:#e4e4e4"></div>
<div class="x" style="left:29.25px;top:839.6px;width:22px;text-align:center;line-height:12px;font-size:10px;color:#333">52</div>
<div class="q" style="left:29.5px;top:851.65px;width:21.0px;height:1.0px;background:#e4e4e4"></div>
<div class="q" style="left:29.5px;top:863.65px;width:21.0px;height:1.0px;background:#e4e4e4"></div>
<div class="x" style="left:29.25px;top:852.65px;width:22px;text-align:center;line-height:12px;font-size:10px;color:#333">54</div>
<div class="q" style="left:29.5px;top:875.65px;width:21.0px;height:1.0px;background:#e4e4e4"></div>
<div class="x" style="left:29.25px;top:864.65px;width:22px;text-align:center;line-height:12px;font-size:10px;color:#333">55</div>
<div class="q" style="left:29.5px;top:887.65px;width:21.0px;height:1.0px;background:#e4e4e4"></div>
<div class="x" style="left:29.25px;top:876.65px;width:22px;text-align:center;line-height:12px;font-size:10px;color:#333">56</div>
<div class="q" style="left:29.5px;top:899.65px;width:21.0px;height:1.0px;background:#e4e4e4"></div>
<div class="x" style="left:29.25px;top:888.65px;width:22px;text-align:center;line-height:12px;font-size:10px;color:#333">57</div>
<div class="q" style="left:29.5px;top:911.65px;width:21.0px;height:1.0px;background:#e4e4e4"></div>
<div class="x" style="left:29.25px;top:900.65px;width:22px;text-align:center;line-height:12px;font-size:10px;color:#333">58</div>
<div class="q" style="left:29.5px;top:923.65px;width:21.0px;height:1.0px;background:#e4e4e4"></div>
<div class="x" style="left:29.25px;top:912.65px;width:22px;text-align:center;line-height:12px;font-size:10px;color:#333">59</div>
<div class="q" style="left:29.5px;top:935.65px;width:21.0px;height:1.0px;background:#e4e4e4"></div>
<div class="x" style="left:29.25px;top:924.65px;width:22px;text-align:center;line-height:12px;font-size:10px;color:#333">60</div>
<div class="q" style="left:29.5px;top:947.65px;width:21.0px;height:1.0px;background:#e4e4e4"></div>
<div class="x" style="left:29.25px;top:936.65px;width:22px;text-align:center;line-height:12px;font-size:10px;color:#333">61</div>
<div class="q" style="left:29.5px;top:959.65px;width:21.0px;height:1.0px;background:#e4e4e4"></div>
<div class="x" style="left:29.25px;top:948.65px;width:22px;text-align:center;line-height:12px;font-size:10px;color:#333">62</div>
<div class="q" style="left:29.5px;top:971.65px;width:21.0px;height:1.0px;background:#e4e4e4"></div>
<div class="x" style="left:29.25px;top:960.65px;width:22px;text-align:center;line-height:12px;font-size:10px;color:#333">63</div>
<div class="q" style="left:29.5px;top:972.7px;width:21.0px;height:1.0px;background:#e4e4e4"></div>
<div class="q" style="left:29.5px;top:984.7px;width:21.0px;height:1.0px;background:#e4e4e4"></div>
<div class="x" style="left:29.25px;top:973.7px;width:22px;text-align:center;line-height:12px;font-size:10px;color:#333">65</div>
<div class="q" style="left:29.5px;top:996.7px;width:21.0px;height:1.0px;background:#e4e4e4"></div>
<div class="x" style="left:29.25px;top:985.7px;width:22px;text-align:center;line-height:12px;font-size:10px;color:#333">66</div>
<div class="q" style="left:29.5px;top:1008.7px;width:21.0px;height:1.0px;background:#e4e4e4"></div>
<div class="x" style="left:29.25px;top:997.7px;width:22px;text-align:center;line-height:12px;font-size:10px;color:#333">67</div>
<div class="q" style="left:29.5px;top:1020.7px;width:21.0px;height:1.0px;background:#e4e4e4"></div>
<div class="x" style="left:29.25px;top:1009.7px;width:22px;text-align:center;line-height:12px;font-size:10px;color:#333">68</div>
<div class="q" style="left:29.5px;top:1032.7px;width:21.0px;height:1.0px;background:#e4e4e4"></div>
<div class="x" style="left:29.25px;top:1021.7px;width:22px;text-align:center;line-height:12px;font-size:10px;color:#333">69</div>
<div class="q" style="left:29.5px;top:1044.7px;width:21.0px;height:1.0px;background:#e4e4e4"></div>
<div class="x" style="left:29.25px;top:1033.7px;width:22px;text-align:center;line-height:12px;font-size:10px;color:#333">70</div>
<div class="q" style="left:29.5px;top:1056.7px;width:21.0px;height:1.0px;background:#e4e4e4"></div>
<div class="x" style="left:29.25px;top:1045.7px;width:22px;text-align:center;line-height:12px;font-size:10px;color:#333">71</div>
<div class="q" style="left:29.5px;top:1068.7px;width:21.0px;height:1.0px;background:#e4e4e4"></div>
<div class="x" style="left:29.25px;top:1057.7px;width:22px;text-align:center;line-height:12px;font-size:10px;color:#333">72</div>
<div class="q" style="left:29.5px;top:1080.7px;width:21.0px;height:1.0px;background:#e4e4e4"></div>
<div class="x" style="left:29.25px;top:1069.7px;width:22px;text-align:center;line-height:12px;font-size:10px;color:#333">73</div>
<div class="q" style="left:29.5px;top:1092.7px;width:21.0px;height:1.0px;background:#e4e4e4"></div>
<div class="x" style="left:29.25px;top:1081.7px;width:22px;text-align:center;line-height:12px;font-size:10px;color:#333">74</div>
<div class="q" style="left:29.5px;top:1093.75px;width:21.0px;height:1.0px;background:#e4e4e4"></div>
<div class="q" style="left:29.5px;top:1105.75px;width:21.0px;height:1.0px;background:#e4e4e4"></div>
<div class="x" style="left:29.25px;top:1094.75px;width:22px;text-align:center;line-height:12px;font-size:10px;color:#333">76</div>
<div class="q" style="left:29.5px;top:1117.75px;width:21.0px;height:1.0px;background:#e4e4e4"></div>
<div class="x" style="left:29.25px;top:1106.75px;width:22px;text-align:center;line-height:12px;font-size:10px;color:#333">77</div>
<div class="q" style="left:29.5px;top:1129.75px;width:21.0px;height:1.0px;background:#e4e4e4"></div>
<div class="x" style="left:29.25px;top:1118.75px;width:22px;text-align:center;line-height:12px;font-size:10px;color:#333">78</div>
<div class="q" style="left:29.5px;top:1141.75px;width:21.0px;height:1.0px;background:#e4e4e4"></div>
<div class="x" style="left:29.25px;top:1130.75px;width:22px;text-align:center;line-height:12px;font-size:10px;color:#333">79</div>
<div class="q" style="left:29.5px;top:1153.75px;width:21.0px;height:1.0px;background:#e4e4e4"></div>
<div class="x" style="left:29.25px;top:1142.75px;width:22px;text-align:center;line-height:12px;font-size:10px;color:#333">80</div>
<div class="q" style="left:29.5px;top:1165.75px;width:21.0px;height:1.0px;background:#e4e4e4"></div>
<div class="x" style="left:29.25px;top:1154.75px;width:22px;text-align:center;line-height:12px;font-size:10px;color:#333">81</div>
<div class="q" style="left:29.5px;top:1177.75px;width:21.0px;height:1.0px;background:#e4e4e4"></div>
<div class="x" style="left:29.25px;top:1166.75px;width:22px;text-align:center;line-height:12px;font-size:10px;color:#333">82</div>
<div class="q" style="left:29.5px;top:1178.8px;width:21.0px;height:1.0px;background:#e4e4e4"></div>
<div class="q" style="left:29.5px;top:1190.8px;width:21.0px;height:1.0px;background:#e4e4e4"></div>
<div class="x" style="left:29.25px;top:1179.8px;width:22px;text-align:center;line-height:12px;font-size:10px;color:#333">84</div>
<div class="q" style="left:29.5px;top:1202.8px;width:21.0px;height:1.0px;background:#e4e4e4"></div>
<div class="x" style="left:29.25px;top:1191.8px;width:22px;text-align:center;line-height:12px;font-size:10px;color:#333">85</div>
<div class="q" style="left:29.5px;top:1214.8px;width:21.0px;height:1.0px;background:#e4e4e4"></div>
<div class="x" style="left:29.25px;top:1203.8px;width:22px;text-align:center;line-height:12px;font-size:10px;color:#333">86</div>
<div class="q" style="left:29.5px;top:1226.8px;width:21.0px;height:1.0px;background:#e4e4e4"></div>
<div class="x" style="left:29.25px;top:1215.8px;width:22px;text-align:center;line-height:12px;font-size:10px;color:#333">87</div>
<div class="q" style="left:29.5px;top:1238.8px;width:21.0px;height:1.0px;background:#e4e4e4"></div>
<div class="x" style="left:29.25px;top:1227.8px;width:22px;text-align:center;line-height:12px;font-size:10px;color:#333">88</div>
<div class="q" style="left:29.5px;top:1250.8px;width:21.0px;height:1.0px;background:#e4e4e4"></div>
<div class="x" style="left:29.25px;top:1239.8px;width:22px;text-align:center;line-height:12px;font-size:10px;color:#333">89</div>
<div class="q" style="left:29.5px;top:1262.8px;width:21.0px;height:1.0px;background:#e4e4e4"></div>
<div class="x" style="left:29.25px;top:1251.8px;width:22px;text-align:center;line-height:12px;font-size:10px;color:#333">90</div>
<div class="q" style="left:29.5px;top:1274.8px;width:21.0px;height:1.0px;background:#e4e4e4"></div>
<div class="x" style="left:29.25px;top:1263.8px;width:22px;text-align:center;line-height:12px;font-size:10px;color:#333">91</div>
<div class="q" style="left:29.5px;top:1286.8px;width:21.0px;height:1.0px;background:#e4e4e4"></div>
<div class="x" style="left:29.25px;top:1275.8px;width:22px;text-align:center;line-height:12px;font-size:10px;color:#333">92</div>
<div class="x" style="left:208.0px;top:342.0px;width:200px;text-align:center;line-height:12px;font-size:10.5px;font-weight:700;letter-spacing:.3px;-webkit-text-stroke:.25px #000">Unit</div>
<div class="x" style="left:400.0px;top:342.0px;width:200px;text-align:center;line-height:12px;font-size:10.5px;font-weight:700;letter-spacing:.4px;-webkit-text-stroke:.25px #000">Historicals</div>
<div class="x" style="left:750.0px;top:342.0px;width:200px;text-align:center;line-height:12px;font-size:10.5px;font-weight:700;letter-spacing:.4px;-webkit-text-stroke:.25px #000">Forecast</div>
<div class="q" style="left:65.5px;top:353px;width:155.0px;height:1.2px;background:#111"></div>
<div class="q" style="left:225px;top:353px;width:52px;height:1.2px;background:#111"></div>
<div class="q" style="left:282px;top:353px;width:52px;height:1.2px;background:#111"></div>
<div class="q" style="left:339px;top:353px;width:57.5px;height:1.2px;background:#111"></div>
<div class="q" style="left:401px;top:353px;width:195.5px;height:1.2px;background:#111"></div>
<div class="q" style="left:602px;top:353px;width:495px;height:1.2px;background:#111"></div>
<div class="q" style="left:336.5px;top:354.5px;width:63.0px;height:48.0px;background:#d4d4d4"></div>
<div class="q" style="left:400px;top:354.5px;width:200px;height:48.0px;background:#f0f0f0"></div>
<div class="x" style="left:297px;width:100px;text-align:right;top:354.0px;line-height:12px;font-size:10.5px;font-weight:700;letter-spacing:.5px;-webkit-text-stroke:.25px #000">BoP</div>
<div class="x" style="left:297px;width:100px;text-align:right;top:366.0px;line-height:12px;font-size:10.5px;font-weight:700;letter-spacing:.5px;-webkit-text-stroke:.25px #000">EoP</div>
<div class="x" style="left:297px;width:100px;text-align:right;top:378.0px;line-height:12px;font-size:10.5px;font-weight:700;letter-spacing:.5px;-webkit-text-stroke:.25px #000">Year</div>
<div class="x" style="left:297px;width:100px;text-align:right;top:390.0px;line-height:12px;font-size:10.5px;font-weight:700;letter-spacing:.5px;-webkit-text-stroke:.25px #000">Days</div>
<div class="x" style="left:400.0px;top:354.5px;width:50px;text-align:center;line-height:12px;font-size:10.6px;letter-spacing:-.55px">1/1/2019</div>
<div class="x" style="left:400.0px;top:366.0px;width:50px;text-align:center;line-height:12px;font-size:10.5px;font-weight:700;letter-spacing:-.05px">#######</div>
<div class="x" style="left:400.0px;top:378.5px;width:50px;text-align:center;line-height:12px;font-size:10.6px;letter-spacing:-.4px">2019</div>
<div class="x" style="left:400.0px;top:390.5px;width:50px;text-align:center;line-height:12px;font-size:10.6px;letter-spacing:-.4px">365</div>
<div class="x" style="left:450.0px;top:354.5px;width:50px;text-align:center;line-height:12px;font-size:10.6px;letter-spacing:-.55px">1/1/2020</div>
<div class="x" style="left:450.0px;top:366.0px;width:50px;text-align:center;line-height:12px;font-size:10.5px;font-weight:700;letter-spacing:-.05px">#######</div>
<div class="x" style="left:450.0px;top:378.5px;width:50px;text-align:center;line-height:12px;font-size:10.6px;letter-spacing:-.4px">2020</div>
<div class="x" style="left:450.0px;top:390.5px;width:50px;text-align:center;line-height:12px;font-size:10.6px;letter-spacing:-.4px">366</div>
<div class="x" style="left:500.0px;top:354.5px;width:50px;text-align:center;line-height:12px;font-size:10.6px;letter-spacing:-.55px">1/1/2021</div>
<div class="x" style="left:500.0px;top:366.0px;width:50px;text-align:center;line-height:12px;font-size:10.5px;font-weight:700;letter-spacing:-.05px">#######</div>
<div class="x" style="left:500.0px;top:378.5px;width:50px;text-align:center;line-height:12px;font-size:10.6px;letter-spacing:-.4px">2021</div>
<div class="x" style="left:500.0px;top:390.5px;width:50px;text-align:center;line-height:12px;font-size:10.6px;letter-spacing:-.4px">365</div>
<div class="x" style="left:550.0px;top:354.5px;width:50px;text-align:center;line-height:12px;font-size:10.6px;letter-spacing:-.55px">1/1/2022</div>
<div class="x" style="left:550.0px;top:366.0px;width:50px;text-align:center;line-height:12px;font-size:10.5px;font-weight:700;letter-spacing:-.05px">#######</div>
<div class="x" style="left:550.0px;top:378.5px;width:50px;text-align:center;line-height:12px;font-size:10.6px;letter-spacing:-.4px">2022</div>
<div class="x" style="left:550.0px;top:390.5px;width:50px;text-align:center;line-height:12px;font-size:10.6px;letter-spacing:-.4px">365</div>
<div class="x" style="left:600.0px;top:354.5px;width:50px;text-align:center;line-height:12px;font-size:10.6px;letter-spacing:-.55px">1/1/2023</div>
<div class="x" style="left:600.0px;top:366.0px;width:50px;text-align:center;line-height:12px;font-size:10.5px;font-weight:700;letter-spacing:-.05px">#######</div>
<div class="x" style="left:600.0px;top:378.5px;width:50px;text-align:center;line-height:12px;font-size:10.6px;letter-spacing:-.4px">2023</div>
<div class="x" style="left:600.0px;top:390.5px;width:50px;text-align:center;line-height:12px;font-size:10.6px;letter-spacing:-.4px">365</div>
<div class="x" style="left:650.0px;top:354.5px;width:50px;text-align:center;line-height:12px;font-size:10.6px;letter-spacing:-.55px">1/1/2024</div>
<div class="x" style="left:650.0px;top:366.0px;width:50px;text-align:center;line-height:12px;font-size:10.5px;font-weight:700;letter-spacing:-.05px">#######</div>
<div class="x" style="left:650.0px;top:378.5px;width:50px;text-align:center;line-height:12px;font-size:10.6px;letter-spacing:-.4px">2024</div>
<div class="x" style="left:650.0px;top:390.5px;width:50px;text-align:center;line-height:12px;font-size:10.6px;letter-spacing:-.4px">366</div>
<div class="x" style="left:700.0px;top:354.5px;width:50px;text-align:center;line-height:12px;font-size:10.6px;letter-spacing:-.55px">1/1/2025</div>
<div class="x" style="left:700.0px;top:366.0px;width:50px;text-align:center;line-height:12px;font-size:10.5px;font-weight:700;letter-spacing:-.05px">#######</div>
<div class="x" style="left:700.0px;top:378.5px;width:50px;text-align:center;line-height:12px;font-size:10.6px;letter-spacing:-.4px">2025</div>
<div class="x" style="left:700.0px;top:390.5px;width:50px;text-align:center;line-height:12px;font-size:10.6px;letter-spacing:-.4px">365</div>
<div class="x" style="left:750.0px;top:354.5px;width:50px;text-align:center;line-height:12px;font-size:10.6px;letter-spacing:-.55px">1/1/2026</div>
<div class="x" style="left:750.0px;top:366.0px;width:50px;text-align:center;line-height:12px;font-size:10.5px;font-weight:700;letter-spacing:-.05px">#######</div>
<div class="x" style="left:750.0px;top:378.5px;width:50px;text-align:center;line-height:12px;font-size:10.6px;letter-spacing:-.4px">2026</div>
<div class="x" style="left:750.0px;top:390.5px;width:50px;text-align:center;line-height:12px;font-size:10.6px;letter-spacing:-.4px">365</div>
<div class="x" style="left:800.0px;top:354.5px;width:50px;text-align:center;line-height:12px;font-size:10.6px;letter-spacing:-.55px">1/1/2027</div>
<div class="x" style="left:800.0px;top:366.0px;width:50px;text-align:center;line-height:12px;font-size:10.5px;font-weight:700;letter-spacing:-.05px">#######</div>
<div class="x" style="left:800.0px;top:378.5px;width:50px;text-align:center;line-height:12px;font-size:10.6px;letter-spacing:-.4px">2027</div>
<div class="x" style="left:800.0px;top:390.5px;width:50px;text-align:center;line-height:12px;font-size:10.6px;letter-spacing:-.4px">365</div>
<div class="x" style="left:850.0px;top:354.5px;width:50px;text-align:center;line-height:12px;font-size:10.6px;letter-spacing:-.55px">1/1/2028</div>
<div class="x" style="left:850.0px;top:366.0px;width:50px;text-align:center;line-height:12px;font-size:10.5px;font-weight:700;letter-spacing:-.05px">#######</div>
<div class="x" style="left:850.0px;top:378.5px;width:50px;text-align:center;line-height:12px;font-size:10.6px;letter-spacing:-.4px">2028</div>
<div class="x" style="left:850.0px;top:390.5px;width:50px;text-align:center;line-height:12px;font-size:10.6px;letter-spacing:-.4px">366</div>
<div class="x" style="left:900.0px;top:354.5px;width:50px;text-align:center;line-height:12px;font-size:10.6px;letter-spacing:-.55px">1/1/2029</div>
<div class="x" style="left:900.0px;top:366.0px;width:50px;text-align:center;line-height:12px;font-size:10.5px;font-weight:700;letter-spacing:-.05px">#######</div>
<div class="x" style="left:900.0px;top:378.5px;width:50px;text-align:center;line-height:12px;font-size:10.6px;letter-spacing:-.4px">2029</div>
<div class="x" style="left:900.0px;top:390.5px;width:50px;text-align:center;line-height:12px;font-size:10.6px;letter-spacing:-.4px">365</div>
<div class="x" style="left:950.0px;top:354.5px;width:50px;text-align:center;line-height:12px;font-size:10.6px;letter-spacing:-.55px">1/1/2030</div>
<div class="x" style="left:950.0px;top:366.0px;width:50px;text-align:center;line-height:12px;font-size:10.5px;font-weight:700;letter-spacing:-.05px">#######</div>
<div class="x" style="left:950.0px;top:378.5px;width:50px;text-align:center;line-height:12px;font-size:10.6px;letter-spacing:-.4px">2030</div>
<div class="x" style="left:950.0px;top:390.5px;width:50px;text-align:center;line-height:12px;font-size:10.6px;letter-spacing:-.4px">365</div>
<div class="x" style="left:1000.0px;top:354.5px;width:50px;text-align:center;line-height:12px;font-size:10.6px;letter-spacing:-.55px">1/1/2031</div>
<div class="x" style="left:1000.0px;top:366.0px;width:50px;text-align:center;line-height:12px;font-size:10.5px;font-weight:700;letter-spacing:-.05px">#######</div>
<div class="x" style="left:1000.0px;top:378.5px;width:50px;text-align:center;line-height:12px;font-size:10.6px;letter-spacing:-.4px">2031</div>
<div class="x" style="left:1000.0px;top:390.5px;width:50px;text-align:center;line-height:12px;font-size:10.6px;letter-spacing:-.4px">365</div>
<div class="x" style="left:1050.0px;top:354.5px;width:50px;text-align:center;line-height:12px;font-size:10.6px;letter-spacing:-.55px">1/1/2032</div>
<div class="x" style="left:1050.0px;top:366.0px;width:50px;text-align:center;line-height:12px;font-size:10.5px;font-weight:700;letter-spacing:-.05px">#######</div>
<div class="x" style="left:1050.0px;top:378.5px;width:50px;text-align:center;line-height:12px;font-size:10.6px;letter-spacing:-.4px">2032</div>
<div class="x" style="left:1050.0px;top:390.5px;width:50px;text-align:center;line-height:12px;font-size:10.6px;letter-spacing:-.4px">366</div>
<div class="q" style="left:0px;top:402px;width:1107px;height:1.2px;background:#9c9c9c"></div>
<div class="q" style="left:399px;top:269px;width:1.2px;height:1018px;background:#9c9c9c"></div>
<div class="x" style="left:55px;top:414.0px;line-height:12px;font-size:11px;color:#111">X</div>
<div class="q" style="left:63px;top:414.5px;width:1037px;height:12.0px;background:#1783ae"></div>
<div class="x" style="left:66.5px;top:414.0px;line-height:12px;font-size:10.5px;font-weight:700;color:#fff;letter-spacing:.5px;-webkit-text-stroke:.2px #fff">Income Statement</div>
<div class="x" style="left:55px;top:730.6px;line-height:12px;font-size:11px;color:#111">X</div>
<div class="q" style="left:63px;top:731.1px;width:1037px;height:12.0px;background:#1783ae"></div>
<div class="x" style="left:66.5px;top:730.6px;line-height:12px;font-size:10.5px;font-weight:700;color:#fff;letter-spacing:.5px;-webkit-text-stroke:.2px #fff">Balance Sheet</div>
<div class="q" style="left:63px;top:438.5px;width:1037px;height:12.0px;background:#efefef"></div>
<div class="w" style="top:439.0px"><span class="LB">Revenues</span><span class="UB">MXNmm</span><span class="R g" style="left:400px;width:43.46px;letter-spacing:-0.74px">12,154</span><span class="R g" style="left:450px;width:43.82px;letter-spacing:-0.38px">14,298</span><span class="R g" style="left:500px;width:43.82px;letter-spacing:-0.38px">17,086</span><span class="R u" style="left:550px;width:44.18px;letter-spacing:-0.02px">20,325</span><span class="R g" style="left:600px;width:44.18px;letter-spacing:-0.02px">20,944</span><span class="R g" style="left:650px;width:44.18px;letter-spacing:-0.02px">22,047</span><span class="R g" style="left:700px;width:44.18px;letter-spacing:-0.02px">23,025</span><span class="R g" style="left:750px;width:44.18px;letter-spacing:-0.02px">24,335</span><span class="R g" style="left:800px;width:43.82px;letter-spacing:-0.38px">25,718</span><span class="R g" style="left:850px;width:44.18px;letter-spacing:-0.02px">27,077</span><span class="R g" style="left:900px;width:44.18px;letter-spacing:-0.02px">28,469</span><span class="R g" style="left:950px;width:43.82px;letter-spacing:-0.38px">29,891</span><span class="R g" style="left:1000px;width:43.82px;letter-spacing:-0.38px">31,433</span><span class="R g" style="left:1050px;width:44.18px;letter-spacing:-0.02px">33,068</span></div>
<div class="w" style="top:451.0px"><span class="LI">Growth</span><span class="UI">Var. %</span><span class="I" style="left:450px;width:44.05px;letter-spacing:-0.35px">17.6%</span><span class="I" style="left:500px;width:44.05px;letter-spacing:-0.35px">19.5%</span><span class="I" style="left:550px;width:44.05px;letter-spacing:-0.35px">19.0%</span><span class="I" style="left:600px;width:44.43px;letter-spacing:0.03px">3.0%</span><span class="I" style="left:650px;width:44.43px;letter-spacing:0.03px">5.3%</span><span class="I" style="left:700px;width:44.43px;letter-spacing:0.03px">4.4%</span><span class="I" style="left:750px;width:44.43px;letter-spacing:0.03px">5.7%</span><span class="I" style="left:800px;width:44.43px;letter-spacing:0.03px">5.7%</span><span class="I" style="left:850px;width:44.43px;letter-spacing:0.03px">5.3%</span><span class="I" style="left:900px;width:43.89px;letter-spacing:-0.51px">5.1%</span><span class="I" style="left:950px;width:44.43px;letter-spacing:0.03px">5.0%</span><span class="I" style="left:1000px;width:44.43px;letter-spacing:0.03px">5.2%</span><span class="I" style="left:1050px;width:44.43px;letter-spacing:0.03px">5.2%</span></div>
<div class="w" style="top:463.92px"><span class="L">COGS</span><span class="U">MXN mm</span><span class="N g" style="left:400px;width:46.96px;letter-spacing:-0.14px">(7,637)</span><span class="N g" style="left:450px;width:46.65px;letter-spacing:-0.45px">(9,102)</span><span class="N g" style="left:500px;width:46.18px;letter-spacing:-0.92px">(11,310)</span><span class="N u" style="left:550px;width:46.72px;letter-spacing:-0.38px">(14,380)</span><span class="N g" style="left:600px;width:46.72px;letter-spacing:-0.38px">(13,878)</span><span class="N g" style="left:650px;width:46.72px;letter-spacing:-0.38px">(14,298)</span><span class="N g" style="left:700px;width:46.72px;letter-spacing:-0.38px">(14,632)</span><span class="N g" style="left:750px;width:46.72px;letter-spacing:-0.38px">(15,263)</span><span class="N g" style="left:800px;width:46.45px;letter-spacing:-0.65px">(15,918)</span><span class="N g" style="left:850px;width:46.72px;letter-spacing:-0.38px">(16,553)</span><span class="N g" style="left:900px;width:46.45px;letter-spacing:-0.65px">(17,196)</span><span class="N g" style="left:950px;width:46.72px;letter-spacing:-0.38px">(17,846)</span><span class="N g" style="left:1000px;width:46.72px;letter-spacing:-0.38px">(18,549)</span><span class="N g" style="left:1050px;width:46.72px;letter-spacing:-0.38px">(19,287)</span></div>
<div class="q" style="left:63px;top:475.42px;width:1037px;height:12.0px;background:#efefef"></div>
<div class="w" style="top:475.92px"><span class="LB">Gross Profit</span><span class="UB">MXN mm</span><span class="B" style="left:400px;width:42.69px;letter-spacing:0.49px">4,518</span><span class="B" style="left:450px;width:42.69px;letter-spacing:0.49px">5,196</span><span class="B" style="left:500px;width:43.15px;letter-spacing:0.95px">5,776</span><span class="B" style="left:550px;width:43.15px;letter-spacing:0.95px">5,945</span><span class="B" style="left:600px;width:43.15px;letter-spacing:0.95px">7,066</span><span class="B" style="left:650px;width:43.15px;letter-spacing:0.95px">7,749</span><span class="B" style="left:700px;width:43.15px;letter-spacing:0.95px">8,394</span><span class="B" style="left:750px;width:43.15px;letter-spacing:0.95px">9,072</span><span class="B" style="left:800px;width:43.15px;letter-spacing:0.95px">9,799</span><span class="B" style="left:850px;width:42.80px;letter-spacing:0.60px">10,524</span><span class="B" style="left:900px;width:42.42px;letter-spacing:0.22px">11,273</span><span class="B" style="left:950px;width:42.80px;letter-spacing:0.60px">12,045</span><span class="B" style="left:1000px;width:42.80px;letter-spacing:0.60px">12,885</span><span class="B" style="left:1050px;width:42.42px;letter-spacing:0.22px">13,781</span></div>
<div class="w" style="top:487.92px"><span class="LI">Gross Margin</span><span class="UI">% of Revenues</span><span class="I" style="left:400px;width:44.48px;letter-spacing:0.08px">37.2%</span><span class="I" style="left:450px;width:44.48px;letter-spacing:0.08px">36.3%</span><span class="I" style="left:500px;width:44.48px;letter-spacing:0.08px">33.8%</span><span class="I" style="left:550px;width:44.48px;letter-spacing:0.08px">29.2%</span><span class="I" style="left:600px;width:44.48px;letter-spacing:0.08px">33.7%</span><span class="I" style="left:650px;width:44.05px;letter-spacing:-0.35px">35.1%</span><span class="I" style="left:700px;width:44.48px;letter-spacing:0.08px">36.5%</span><span class="I" style="left:750px;width:44.48px;letter-spacing:0.08px">37.3%</span><span class="I" style="left:800px;width:44.05px;letter-spacing:-0.35px">38.1%</span><span class="I" style="left:850px;width:44.48px;letter-spacing:0.08px">38.9%</span><span class="I" style="left:900px;width:44.48px;letter-spacing:0.08px">39.6%</span><span class="I" style="left:950px;width:44.48px;letter-spacing:0.08px">40.3%</span><span class="I" style="left:1000px;width:44.05px;letter-spacing:-0.35px">41.0%</span><span class="I" style="left:1050px;width:44.05px;letter-spacing:-0.35px">41.7%</span></div>
<div class="w" style="top:500.84px"><span class="L">SG&amp;A</span><span class="U">MXN mm</span><span class="N g" style="left:400px;width:46.96px;letter-spacing:-0.14px">(2,072)</span><span class="N g" style="left:450px;width:46.65px;letter-spacing:-0.45px">(2,104)</span><span class="N g" style="left:500px;width:46.96px;letter-spacing:-0.14px">(2,395)</span><span class="N u" style="left:550px;width:46.96px;letter-spacing:-0.14px">(2,345)</span><span class="N g" style="left:600px;width:46.65px;letter-spacing:-0.45px">(2,551)</span><span class="N g" style="left:650px;width:46.96px;letter-spacing:-0.14px">(2,655)</span><span class="N g" style="left:700px;width:46.96px;letter-spacing:-0.14px">(2,755)</span><span class="N g" style="left:750px;width:46.96px;letter-spacing:-0.14px">(2,858)</span><span class="N g" style="left:800px;width:46.96px;letter-spacing:-0.14px">(2,959)</span><span class="N g" style="left:850px;width:46.96px;letter-spacing:-0.14px">(3,050)</span><span class="N g" style="left:900px;width:46.65px;letter-spacing:-0.45px">(3,138)</span><span class="N g" style="left:950px;width:46.96px;letter-spacing:-0.14px">(3,222)</span><span class="N g" style="left:1000px;width:46.65px;letter-spacing:-0.45px">(3,315)</span><span class="N g" style="left:1050px;width:46.35px;letter-spacing:-0.75px">(3,411)</span></div>
<div class="q" style="left:63px;top:512.34px;width:1037px;height:12.0px;background:#efefef"></div>
<div class="w" style="top:512.84px"><span class="LB">EBITDA</span><span class="UB">MXN mm</span><span class="B" style="left:400px;width:43.15px;letter-spacing:0.95px">2,446</span><span class="B" style="left:450px;width:43.15px;letter-spacing:0.95px">3,092</span><span class="B" style="left:500px;width:42.69px;letter-spacing:0.49px">3,381</span><span class="B" style="left:550px;width:43.15px;letter-spacing:0.95px">3,599</span><span class="B" style="left:600px;width:42.69px;letter-spacing:0.49px">4,514</span><span class="B" style="left:650px;width:43.15px;letter-spacing:0.95px">5,094</span><span class="B" style="left:700px;width:43.15px;letter-spacing:0.95px">5,639</span><span class="B" style="left:750px;width:42.69px;letter-spacing:0.49px">6,214</span><span class="B" style="left:800px;width:43.15px;letter-spacing:0.95px">6,840</span><span class="B" style="left:850px;width:43.15px;letter-spacing:0.95px">7,473</span><span class="B" style="left:900px;width:42.69px;letter-spacing:0.49px">8,135</span><span class="B" style="left:950px;width:43.15px;letter-spacing:0.95px">8,823</span><span class="B" style="left:1000px;width:43.15px;letter-spacing:0.95px">9,570</span><span class="B" style="left:1050px;width:42.80px;letter-spacing:0.60px">10,370</span></div>
<div class="w" style="top:524.84px"><span class="LI">EBITDA Margin</span><span class="UI">% of Revenues</span><span class="I" style="left:400px;width:44.05px;letter-spacing:-0.35px">20.1%</span><span class="I" style="left:450px;width:44.05px;letter-spacing:-0.35px">21.6%</span><span class="I" style="left:500px;width:44.05px;letter-spacing:-0.35px">19.8%</span><span class="I" style="left:550px;width:44.05px;letter-spacing:-0.35px">17.7%</span><span class="I" style="left:600px;width:44.05px;letter-spacing:-0.35px">21.6%</span><span class="I" style="left:650px;width:44.05px;letter-spacing:-0.35px">23.1%</span><span class="I" style="left:700px;width:44.48px;letter-spacing:0.08px">24.5%</span><span class="I" style="left:750px;width:44.48px;letter-spacing:0.08px">25.5%</span><span class="I" style="left:800px;width:44.48px;letter-spacing:0.08px">26.6%</span><span class="I" style="left:850px;width:44.48px;letter-spacing:0.08px">27.6%</span><span class="I" style="left:900px;width:44.48px;letter-spacing:0.08px">28.6%</span><span class="I" style="left:950px;width:44.48px;letter-spacing:0.08px">29.5%</span><span class="I" style="left:1000px;width:44.48px;letter-spacing:0.08px">30.4%</span><span class="I" style="left:1050px;width:44.05px;letter-spacing:-0.35px">31.4%</span></div>
<div class="w" style="top:537.76px"><span class="L">D&amp;A</span><span class="U">MXN mm</span><span class="N g" style="left:400px;width:46.65px;letter-spacing:-0.45px">(1,296)</span><span class="N g" style="left:450px;width:46.65px;letter-spacing:-0.45px">(1,337)</span><span class="N g" style="left:500px;width:46.65px;letter-spacing:-0.45px">(1,503)</span><span class="N u" style="left:550px;width:46.35px;letter-spacing:-0.75px">(1,913)</span><span class="N g" style="left:600px;width:46.65px;letter-spacing:-0.45px">(2,241)</span><span class="N g" style="left:650px;width:46.96px;letter-spacing:-0.14px">(2,645)</span><span class="N g" style="left:700px;width:46.96px;letter-spacing:-0.14px">(3,073)</span><span class="N g" style="left:750px;width:46.96px;letter-spacing:-0.14px">(3,522)</span><span class="N g" style="left:800px;width:46.96px;letter-spacing:-0.14px">(3,994)</span><span class="N g" style="left:850px;width:46.96px;letter-spacing:-0.14px">(4,492)</span><span class="N g" style="left:900px;width:46.65px;letter-spacing:-0.45px">(5,015)</span><span class="N g" style="left:950px;width:46.96px;letter-spacing:-0.14px">(3,388)</span><span class="N g" style="left:1000px;width:46.96px;letter-spacing:-0.14px">(3,566)</span><span class="N g" style="left:1050px;width:46.96px;letter-spacing:-0.14px">(3,753)</span></div>
<div class="q" style="left:63px;top:549.26px;width:1037px;height:12.0px;background:#efefef"></div>
<div class="w" style="top:549.76px"><span style="left:54.5px;font-size:9.5px;font-weight:700;color:#111">x</span><span class="LB">EBIT</span><span class="UB">MXN mm</span><span class="B" style="left:400px;width:42.23px;letter-spacing:0.03px">1,150</span><span class="B" style="left:450px;width:42.69px;letter-spacing:0.49px">1,756</span><span class="B" style="left:500px;width:42.69px;letter-spacing:0.49px">1,878</span><span class="B" style="left:550px;width:42.69px;letter-spacing:0.49px">1,686</span><span class="B" style="left:600px;width:43.15px;letter-spacing:0.95px">2,273</span><span class="B" style="left:650px;width:43.15px;letter-spacing:0.95px">2,448</span><span class="B" style="left:700px;width:43.15px;letter-spacing:0.95px">2,566</span><span class="B" style="left:750px;width:43.15px;letter-spacing:0.95px">2,692</span><span class="B" style="left:800px;width:43.15px;letter-spacing:0.95px">2,846</span><span class="B" style="left:850px;width:43.15px;letter-spacing:0.95px">2,982</span><span class="B" style="left:900px;width:42.69px;letter-spacing:0.49px">3,120</span><span class="B" style="left:950px;width:43.15px;letter-spacing:0.95px">5,435</span><span class="B" style="left:1000px;width:43.15px;letter-spacing:0.95px">6,004</span><span class="B" style="left:1050px;width:42.69px;letter-spacing:0.49px">6,618</span></div>
<div class="w" style="top:561.76px"><span class="LI">EBIT Margin</span><span class="UI">% of Revenues</span><span class="I" style="left:400px;width:44.43px;letter-spacing:0.03px">9.5%</span><span class="I" style="left:450px;width:44.05px;letter-spacing:-0.35px">12.3%</span><span class="I" style="left:500px;width:43.62px;letter-spacing:-0.78px">11.0%</span><span class="I" style="left:550px;width:44.43px;letter-spacing:0.03px">8.3%</span><span class="I" style="left:600px;width:44.05px;letter-spacing:-0.35px">10.9%</span><span class="I" style="left:650px;width:43.19px;letter-spacing:-1.21px">11.1%</span><span class="I" style="left:700px;width:43.19px;letter-spacing:-1.21px">11.1%</span><span class="I" style="left:750px;width:43.19px;letter-spacing:-1.21px">11.1%</span><span class="I" style="left:800px;width:43.19px;letter-spacing:-1.21px">11.1%</span><span class="I" style="left:850px;width:43.62px;letter-spacing:-0.78px">11.0%</span><span class="I" style="left:900px;width:43.62px;letter-spacing:-0.78px">11.0%</span><span class="I" style="left:950px;width:44.05px;letter-spacing:-0.35px">18.2%</span><span class="I" style="left:1000px;width:43.62px;letter-spacing:-0.78px">19.1%</span><span class="I" style="left:1050px;width:44.48px;letter-spacing:0.08px">20.0%</span></div>
<div class="w" style="top:574.68px"><span class="L">Financial Expenses</span><span class="U">MXN mm</span><span class="N g" style="left:400px;width:47.01px;letter-spacing:-0.09px">(704)</span><span class="N g" style="left:450px;width:47.01px;letter-spacing:-0.09px">(639)</span><span class="N g" style="left:500px;width:47.01px;letter-spacing:-0.09px">(602)</span><span class="N u" style="left:550px;width:47.01px;letter-spacing:-0.09px">(938)</span><span class="N g" style="left:600px;width:46.65px;letter-spacing:-0.45px">(1,220)</span><span class="N g" style="left:650px;width:46.65px;letter-spacing:-0.45px">(1,548)</span><span class="N g" style="left:700px;width:46.65px;letter-spacing:-0.45px">(1,622)</span><span class="N g" style="left:750px;width:46.65px;letter-spacing:-0.45px">(1,709)</span><span class="N g" style="left:800px;width:46.35px;letter-spacing:-0.75px">(1,716)</span><span class="N g" style="left:850px;width:46.65px;letter-spacing:-0.45px">(1,639)</span><span class="N g" style="left:900px;width:46.65px;letter-spacing:-0.45px">(1,609)</span><span class="N g" style="left:950px;width:46.65px;letter-spacing:-0.45px">(1,582)</span><span class="N g" style="left:1000px;width:46.35px;letter-spacing:-0.75px">(1,612)</span><span class="N g" style="left:1050px;width:46.65px;letter-spacing:-0.45px">(1,698)</span></div>
<div class="w" style="top:586.68px"><span class="L">Other Income/(Expense)</span><span class="U">MXN mm</span><span class="R g" style="left:400px;width:43.23px;letter-spacing:-0.97px">81</span><span class="N g" style="left:450px;width:46.15px;letter-spacing:-0.95px">(115)</span><span class="R g" style="left:500px;width:44.31px;letter-spacing:0.11px">6</span></div>
<div class="q" style="left:63px;top:598.18px;width:1037px;height:12.0px;background:#efefef"></div>
<div class="w" style="top:598.68px"><span class="LB">EBT</span><span class="UB">MXN mm</span><span class="B" style="left:400px;width:43.36px;letter-spacing:1.16px">527</span><span class="B" style="left:450px;width:42.69px;letter-spacing:0.49px">1,002</span><span class="B" style="left:500px;width:42.69px;letter-spacing:0.49px">1,282</span><span class="B" style="left:550px;width:43.36px;letter-spacing:1.16px">749</span><span class="B" style="left:600px;width:42.69px;letter-spacing:0.49px">1,053</span><span class="B" style="left:650px;width:42.60px;letter-spacing:0.40px">901</span><span class="B" style="left:700px;width:43.36px;letter-spacing:1.16px">945</span><span class="B" style="left:750px;width:43.36px;letter-spacing:1.16px">983</span><span class="B" style="left:800px;width:42.23px;letter-spacing:0.03px">1,130</span><span class="B" style="left:850px;width:42.69px;letter-spacing:0.49px">1,342</span><span class="B" style="left:900px;width:41.77px;letter-spacing:-0.43px">1,511</span><span class="B" style="left:950px;width:43.15px;letter-spacing:0.95px">3,853</span><span class="B" style="left:1000px;width:43.15px;letter-spacing:0.95px">4,392</span><span class="B" style="left:1050px;width:43.15px;letter-spacing:0.95px">4,920</span></div>
<div class="w" style="top:611.6px"><span class="L">Taxes</span><span class="U">MXN mm</span><span class="N g" style="left:400px;width:46.96px;letter-spacing:-0.14px">(78)</span><span class="N g" style="left:450px;width:46.58px;letter-spacing:-0.52px">(341)</span><span class="N g" style="left:500px;width:47.01px;letter-spacing:-0.09px">(432)</span><span class="N u" style="left:550px;width:47.01px;letter-spacing:-0.09px">(244)</span><span class="N g" style="left:600px;width:46.58px;letter-spacing:-0.52px">(316)</span><span class="N g" style="left:650px;width:47.01px;letter-spacing:-0.09px">(270)</span><span class="N g" style="left:700px;width:47.01px;letter-spacing:-0.09px">(283)</span><span class="N g" style="left:750px;width:47.01px;letter-spacing:-0.09px">(295)</span><span class="N g" style="left:800px;width:47.01px;letter-spacing:-0.09px">(339)</span><span class="N g" style="left:850px;width:47.01px;letter-spacing:-0.09px">(403)</span><span class="N g" style="left:900px;width:47.01px;letter-spacing:-0.09px">(453)</span><span class="N g" style="left:950px;width:46.35px;letter-spacing:-0.75px">(1,156)</span><span class="N g" style="left:1000px;width:46.35px;letter-spacing:-0.75px">(1,318)</span><span class="N g" style="left:1050px;width:46.65px;letter-spacing:-0.45px">(1,476)</span></div>
<div class="q" style="left:63px;top:623.1px;width:1037px;height:12.0px;background:#efefef"></div>
<div class="w" style="top:623.6px"><span class="LB">Net Income</span><span class="UB">MXN mm</span><span class="B" style="left:400px;width:43.36px;letter-spacing:1.16px">449</span><span class="B" style="left:450px;width:42.60px;letter-spacing:0.40px">661</span><span class="B" style="left:500px;width:43.36px;letter-spacing:1.16px">850</span><span class="B" style="left:550px;width:43.36px;letter-spacing:1.16px">504</span><span class="B" style="left:600px;width:43.36px;letter-spacing:1.16px">737</span><span class="B" style="left:650px;width:43.36px;letter-spacing:1.16px">630</span><span class="B" style="left:700px;width:42.60px;letter-spacing:0.40px">661</span><span class="B" style="left:750px;width:43.36px;letter-spacing:1.16px">688</span><span class="B" style="left:800px;width:42.60px;letter-spacing:0.40px">791</span><span class="B" style="left:850px;width:43.36px;letter-spacing:1.16px">940</span><span class="B" style="left:900px;width:42.69px;letter-spacing:0.49px">1,058</span><span class="B" style="left:950px;width:43.15px;letter-spacing:0.95px">2,697</span><span class="B" style="left:1000px;width:43.15px;letter-spacing:0.95px">3,074</span><span class="B" style="left:1050px;width:43.15px;letter-spacing:0.95px">3,444</span></div>
<div class="w" style="top:635.6px"><span class="LI">Net Margin</span><span class="UI">% of Revenues</span><span class="I" style="left:400px;width:44.43px;letter-spacing:0.03px">3.7%</span><span class="I" style="left:450px;width:44.43px;letter-spacing:0.03px">4.6%</span><span class="I" style="left:500px;width:44.43px;letter-spacing:0.03px">5.0%</span><span class="I" style="left:550px;width:44.43px;letter-spacing:0.03px">2.5%</span><span class="I" style="left:600px;width:44.43px;letter-spacing:0.03px">3.5%</span><span class="I" style="left:650px;width:44.43px;letter-spacing:0.03px">2.9%</span><span class="I" style="left:700px;width:44.43px;letter-spacing:0.03px">2.9%</span><span class="I" style="left:750px;width:44.43px;letter-spacing:0.03px">2.8%</span><span class="I" style="left:800px;width:43.89px;letter-spacing:-0.51px">3.1%</span><span class="I" style="left:850px;width:44.43px;letter-spacing:0.03px">3.5%</span><span class="I" style="left:900px;width:44.43px;letter-spacing:0.03px">3.7%</span><span class="I" style="left:950px;width:44.43px;letter-spacing:0.03px">9.0%</span><span class="I" style="left:1000px;width:44.43px;letter-spacing:0.03px">9.8%</span><span class="I" style="left:1050px;width:44.05px;letter-spacing:-0.35px">10.4%</span></div>
<div class="w" style="top:659.6px"><span class="LI">Revenue Growth</span><span class="UI">% of Revenues</span><span class="I" style="left:450px;width:44.05px;letter-spacing:-0.35px">17.6%</span><span class="I" style="left:500px;width:44.05px;letter-spacing:-0.35px">19.5%</span><span class="I" style="left:550px;width:44.05px;letter-spacing:-0.35px">19.0%</span><span class="I" style="left:600px;width:44.43px;letter-spacing:0.03px">3.0%</span><span class="I" style="left:650px;width:44.43px;letter-spacing:0.03px">5.3%</span><span class="I" style="left:700px;width:44.43px;letter-spacing:0.03px">4.4%</span><span class="I" style="left:750px;width:44.43px;letter-spacing:0.03px">5.7%</span><span class="I" style="left:800px;width:44.43px;letter-spacing:0.03px">5.7%</span><span class="I" style="left:850px;width:44.43px;letter-spacing:0.03px">5.3%</span><span class="I" style="left:900px;width:43.89px;letter-spacing:-0.51px">5.1%</span><span class="I" style="left:950px;width:44.43px;letter-spacing:0.03px">5.0%</span><span class="I" style="left:1000px;width:44.43px;letter-spacing:0.03px">5.2%</span><span class="I" style="left:1050px;width:44.43px;letter-spacing:0.03px">5.2%</span></div>
<div class="w" style="top:671.6px"><span class="LI">Gross Profit Growth</span><span class="UI">% of Revenues</span><span class="I" style="left:450px;width:44.05px;letter-spacing:-0.35px">15.0%</span><span class="I" style="left:500px;width:43.62px;letter-spacing:-0.78px">11.2%</span><span class="I" style="left:550px;width:44.43px;letter-spacing:0.03px">2.9%</span><span class="I" style="left:600px;width:44.05px;letter-spacing:-0.35px">18.9%</span><span class="I" style="left:650px;width:44.43px;letter-spacing:0.03px">9.7%</span><span class="I" style="left:700px;width:44.43px;letter-spacing:0.03px">8.3%</span><span class="I" style="left:750px;width:43.89px;letter-spacing:-0.51px">8.1%</span><span class="I" style="left:800px;width:44.43px;letter-spacing:0.03px">8.0%</span><span class="I" style="left:850px;width:44.43px;letter-spacing:0.03px">7.4%</span><span class="I" style="left:900px;width:43.89px;letter-spacing:-0.51px">7.1%</span><span class="I" style="left:950px;width:44.43px;letter-spacing:0.03px">6.9%</span><span class="I" style="left:1000px;width:44.43px;letter-spacing:0.03px">7.0%</span><span class="I" style="left:1050px;width:44.43px;letter-spacing:0.03px">7.0%</span></div>
<div class="w" style="top:683.6px"><span class="LI">EBITDA Growth</span><span class="UI">% of Revenues</span><span class="I" style="left:450px;width:44.48px;letter-spacing:0.08px">26.4%</span><span class="I" style="left:500px;width:44.43px;letter-spacing:0.03px">9.3%</span><span class="I" style="left:550px;width:44.43px;letter-spacing:0.03px">6.5%</span><span class="I" style="left:600px;width:44.48px;letter-spacing:0.08px">25.4%</span><span class="I" style="left:650px;width:44.05px;letter-spacing:-0.35px">12.8%</span><span class="I" style="left:700px;width:44.05px;letter-spacing:-0.35px">10.7%</span><span class="I" style="left:750px;width:44.05px;letter-spacing:-0.35px">10.2%</span><span class="I" style="left:800px;width:43.62px;letter-spacing:-0.78px">10.1%</span><span class="I" style="left:850px;width:44.43px;letter-spacing:0.03px">9.3%</span><span class="I" style="left:900px;width:44.43px;letter-spacing:0.03px">8.8%</span><span class="I" style="left:950px;width:44.43px;letter-spacing:0.03px">8.5%</span><span class="I" style="left:1000px;width:44.43px;letter-spacing:0.03px">8.5%</span><span class="I" style="left:1050px;width:44.43px;letter-spacing:0.03px">8.4%</span></div>
<div class="w" style="top:695.6px"><span class="LI">EBIT Growth</span><span class="UI">% of Revenues</span><span class="I" style="left:450px;width:44.48px;letter-spacing:0.08px">52.7%</span><span class="I" style="left:500px;width:44.43px;letter-spacing:0.03px">7.0%</span><span class="I" style="left:550px;width:44.20px;letter-spacing:-0.20px">-10.2%</span><span class="I" style="left:600px;width:44.48px;letter-spacing:0.08px">34.8%</span><span class="I" style="left:650px;width:44.43px;letter-spacing:0.03px">7.7%</span><span class="I" style="left:700px;width:44.43px;letter-spacing:0.03px">4.8%</span><span class="I" style="left:750px;width:44.43px;letter-spacing:0.03px">4.9%</span><span class="I" style="left:800px;width:44.43px;letter-spacing:0.03px">5.7%</span><span class="I" style="left:850px;width:44.43px;letter-spacing:0.03px">4.8%</span><span class="I" style="left:900px;width:44.43px;letter-spacing:0.03px">4.6%</span><span class="I" style="left:950px;width:44.48px;letter-spacing:0.08px">74.2%</span><span class="I" style="left:1000px;width:44.05px;letter-spacing:-0.35px">10.5%</span><span class="I" style="left:1050px;width:44.05px;letter-spacing:-0.35px">10.2%</span></div>
<div class="w" style="top:707.6px"><span class="LI">Net Income Growth</span><span class="UI">% of Revenues</span><span class="I" style="left:450px;width:44.48px;letter-spacing:0.08px">47.3%</span><span class="I" style="left:500px;width:44.48px;letter-spacing:0.08px">28.6%</span><span class="I" style="left:550px;width:44.56px;letter-spacing:0.16px">-40.6%</span><span class="I" style="left:600px;width:44.48px;letter-spacing:0.08px">46.2%</span><span class="I" style="left:650px;width:44.20px;letter-spacing:-0.20px">-14.5%</span><span class="I" style="left:700px;width:44.43px;letter-spacing:0.03px">4.9%</span><span class="I" style="left:750px;width:43.89px;letter-spacing:-0.51px">4.1%</span><span class="I" style="left:800px;width:44.05px;letter-spacing:-0.35px">14.9%</span><span class="I" style="left:850px;width:44.05px;letter-spacing:-0.35px">18.8%</span><span class="I" style="left:900px;width:44.05px;letter-spacing:-0.35px">12.6%</span><span class="I" style="left:950px;width:44.15px;letter-spacing:-0.25px">155.0%</span><span class="I" style="left:1000px;width:44.05px;letter-spacing:-0.35px">14.0%</span><span class="I" style="left:1050px;width:44.05px;letter-spacing:-0.35px">12.0%</span></div>
<div class="w" style="top:744.6px"><span class="LB">Current Assets</span></div>
<div class="w" style="top:756.6px"><span class="L">Cash and Cash Equivalents</span><span class="U">MXN mm</span><span class="R g" style="left:400px;width:42.87px;letter-spacing:-1.33px">511</span><span class="R g" style="left:450px;width:43.73px;letter-spacing:-0.47px">1,525</span><span class="R g" style="left:500px;width:43.30px;letter-spacing:-0.90px">1,261</span><span class="R u" style="left:550px;width:44.31px;letter-spacing:0.11px">996</span><span class="R g" style="left:600px;width:44.31px;letter-spacing:0.11px">200</span><span class="R g" style="left:650px;width:44.31px;letter-spacing:0.11px">200</span><span class="R g" style="left:700px;width:44.31px;letter-spacing:0.11px">200</span><span class="R g" style="left:750px;width:44.31px;letter-spacing:0.11px">200</span><span class="R g" style="left:800px;width:44.31px;letter-spacing:0.11px">200</span><span class="R g" style="left:850px;width:44.31px;letter-spacing:0.11px">200</span><span class="R g" style="left:900px;width:44.31px;letter-spacing:0.11px">200</span><span class="R g" style="left:950px;width:44.31px;letter-spacing:0.11px">200</span><span class="R g" style="left:1000px;width:44.31px;letter-spacing:0.11px">200</span><span class="R g" style="left:1050px;width:44.31px;letter-spacing:0.11px">200</span></div>
<div class="w" style="top:768.6px"><span class="L">Short Term Investments</span><span class="U">MXN mm</span><span class="R g" style="left:450px;width:43.59px;letter-spacing:-0.61px">126</span><span class="R g" style="left:500px;width:43.59px;letter-spacing:-0.61px">140</span><span class="R u" style="left:550px;width:43.59px;letter-spacing:-0.61px">128</span><span class="R g" style="left:600px;width:43.59px;letter-spacing:-0.61px">132</span><span class="R g" style="left:650px;width:43.59px;letter-spacing:-0.61px">139</span><span class="R g" style="left:700px;width:43.59px;letter-spacing:-0.61px">146</span><span class="R g" style="left:750px;width:43.59px;letter-spacing:-0.61px">154</span><span class="R g" style="left:800px;width:43.59px;letter-spacing:-0.61px">163</span><span class="R g" style="left:850px;width:42.87px;letter-spacing:-1.33px">171</span><span class="R g" style="left:900px;width:43.59px;letter-spacing:-0.61px">180</span><span class="R g" style="left:950px;width:43.59px;letter-spacing:-0.61px">189</span><span class="R g" style="left:1000px;width:43.59px;letter-spacing:-0.61px">199</span><span class="R g" style="left:1050px;width:44.31px;letter-spacing:0.11px">209</span></div>
<div class="w" style="top:780.6px"><span class="L">Restricted Cash</span><span class="U">MXN mm</span><span class="R g" style="left:400px;width:44.31px;letter-spacing:0.11px">69</span><span class="R g" style="left:450px;width:44.31px;letter-spacing:0.11px">72</span><span class="R g" style="left:500px;width:44.31px;letter-spacing:0.11px">0</span><span class="R u" style="left:550px;width:44.31px;letter-spacing:0.11px">0</span><span class="R g" style="left:600px;width:44.31px;letter-spacing:0.11px">0</span><span class="R g" style="left:650px;width:44.31px;letter-spacing:0.11px">0</span><span class="R g" style="left:700px;width:44.31px;letter-spacing:0.11px">0</span><span class="R g" style="left:750px;width:44.31px;letter-spacing:0.11px">0</span><span class="R g" style="left:800px;width:44.31px;letter-spacing:0.11px">0</span><span class="R g" style="left:850px;width:44.31px;letter-spacing:0.11px">0</span><span class="R g" style="left:900px;width:44.31px;letter-spacing:0.11px">0</span><span class="R g" style="left:950px;width:44.31px;letter-spacing:0.11px">0</span><span class="R g" style="left:1000px;width:44.31px;letter-spacing:0.11px">0</span><span class="R g" style="left:1050px;width:44.31px;letter-spacing:0.11px">0</span></div>
<div class="w" style="top:792.6px"><span class="L">Inventories</span><span class="U">MXN mm</span><span class="R g" style="left:400px;width:44.31px;letter-spacing:0.11px">47</span><span class="R g" style="left:450px;width:44.31px;letter-spacing:0.11px">88</span><span class="R g" style="left:500px;width:42.87px;letter-spacing:-1.33px">117</span><span class="R u" style="left:550px;width:42.87px;letter-spacing:-1.33px">113</span><span class="R g" style="left:600px;width:42.87px;letter-spacing:-1.33px">118</span><span class="R g" style="left:650px;width:42.87px;letter-spacing:-1.33px">121</span><span class="R g" style="left:700px;width:43.59px;letter-spacing:-0.61px">124</span><span class="R g" style="left:750px;width:43.59px;letter-spacing:-0.61px">130</span><span class="R g" style="left:800px;width:43.59px;letter-spacing:-0.61px">135</span><span class="R g" style="left:850px;width:43.59px;letter-spacing:-0.61px">140</span><span class="R g" style="left:900px;width:43.59px;letter-spacing:-0.61px">146</span><span class="R g" style="left:950px;width:43.59px;letter-spacing:-0.61px">152</span><span class="R g" style="left:1000px;width:43.59px;letter-spacing:-0.61px">158</span><span class="R g" style="left:1050px;width:43.59px;letter-spacing:-0.61px">163</span></div>
<div class="w" style="top:804.6px"><span class="L">Receivables</span><span class="U">MXN mm</span><span class="R g" style="left:400px;width:44.16px;letter-spacing:-0.04px">2,026</span><span class="R g" style="left:450px;width:43.73px;letter-spacing:-0.47px">2,618</span><span class="R g" style="left:500px;width:43.73px;letter-spacing:-0.47px">2,917</span><span class="R u" style="left:550px;width:44.16px;letter-spacing:-0.04px">3,906</span><span class="R g" style="left:600px;width:44.16px;letter-spacing:-0.04px">3,734</span><span class="R g" style="left:650px;width:44.16px;letter-spacing:-0.04px">3,920</span><span class="R g" style="left:700px;width:43.73px;letter-spacing:-0.47px">4,105</span><span class="R g" style="left:750px;width:44.16px;letter-spacing:-0.04px">4,339</span><span class="R g" style="left:800px;width:44.16px;letter-spacing:-0.04px">4,585</span><span class="R g" style="left:850px;width:43.73px;letter-spacing:-0.47px">4,814</span><span class="R g" style="left:900px;width:44.16px;letter-spacing:-0.04px">5,076</span><span class="R g" style="left:950px;width:44.16px;letter-spacing:-0.04px">5,329</span><span class="R g" style="left:1000px;width:44.16px;letter-spacing:-0.04px">5,604</span><span class="R g" style="left:1050px;width:44.16px;letter-spacing:-0.04px">5,880</span></div>
<div class="w" style="top:816.6px"><span class="L">Other Receivables</span><span class="U">MXN mm</span><span class="R g" style="left:400px;width:44.31px;letter-spacing:0.11px">945</span><span class="R g" style="left:450px;width:42.87px;letter-spacing:-1.33px">1,118</span><span class="R g" style="left:500px;width:43.73px;letter-spacing:-0.47px">1,043</span><span class="R u" style="left:550px;width:43.59px;letter-spacing:-0.61px">912</span><span class="R g" style="left:600px;width:44.31px;letter-spacing:0.11px">940</span><span class="R g" style="left:650px;width:44.31px;letter-spacing:0.11px">989</span><span class="R g" style="left:700px;width:43.73px;letter-spacing:-0.47px">1,033</span><span class="R g" style="left:750px;width:43.73px;letter-spacing:-0.47px">1,092</span><span class="R g" style="left:800px;width:43.30px;letter-spacing:-0.90px">1,154</span><span class="R g" style="left:850px;width:43.30px;letter-spacing:-0.90px">1,215</span><span class="R g" style="left:900px;width:43.73px;letter-spacing:-0.47px">1,277</span><span class="R g" style="left:950px;width:43.30px;letter-spacing:-0.90px">1,341</span><span class="R g" style="left:1000px;width:43.30px;letter-spacing:-0.90px">1,410</span><span class="R g" style="left:1050px;width:43.73px;letter-spacing:-0.47px">1,483</span></div>
<div class="w" style="top:828.6px"><span class="L">Prepayments</span><span class="U">MXN mm</span><span class="R g" style="left:400px;width:42.87px;letter-spacing:-1.33px">101</span><span class="R g" style="left:450px;width:43.59px;letter-spacing:-0.61px">126</span><span class="R g" style="left:500px;width:43.59px;letter-spacing:-0.61px">179</span><span class="R u" style="left:550px;width:44.31px;letter-spacing:0.11px">0</span><span class="R g" style="left:600px;width:44.31px;letter-spacing:0.11px">0</span><span class="R g" style="left:650px;width:44.31px;letter-spacing:0.11px">0</span><span class="R g" style="left:700px;width:44.31px;letter-spacing:0.11px">0</span><span class="R g" style="left:750px;width:44.31px;letter-spacing:0.11px">0</span><span class="R g" style="left:800px;width:44.31px;letter-spacing:0.11px">0</span><span class="R g" style="left:850px;width:44.31px;letter-spacing:0.11px">0</span><span class="R g" style="left:900px;width:44.31px;letter-spacing:0.11px">0</span><span class="R g" style="left:950px;width:44.31px;letter-spacing:0.11px">0</span><span class="R g" style="left:1000px;width:44.31px;letter-spacing:0.11px">0</span><span class="R g" style="left:1050px;width:44.31px;letter-spacing:0.11px">0</span></div>
<div class="q" style="left:63px;top:839.1px;width:1037px;height:12.0px;background:#efefef"></div>
<div class="w" style="top:840.6px"><span style="left:54.5px;font-size:9.5px;color:#111">x</span><span class="LB">Total Current Assets</span><span class="UB">MXN mm</span><span class="B" style="left:400px;width:43.15px;letter-spacing:0.95px">3,699</span><span class="B" style="left:450px;width:43.15px;letter-spacing:0.95px">5,674</span><span class="B" style="left:500px;width:43.15px;letter-spacing:0.95px">5,656</span><span class="B" style="left:550px;width:43.15px;letter-spacing:0.95px">6,055</span><span class="B" style="left:600px;width:42.69px;letter-spacing:0.49px">5,124</span><span class="B" style="left:650px;width:43.15px;letter-spacing:0.95px">5,369</span><span class="B" style="left:700px;width:43.15px;letter-spacing:0.95px">5,608</span><span class="B" style="left:750px;width:42.69px;letter-spacing:0.49px">5,914</span><span class="B" style="left:800px;width:43.15px;letter-spacing:0.95px">6,237</span><span class="B" style="left:850px;width:43.15px;letter-spacing:0.95px">6,540</span><span class="B" style="left:900px;width:43.15px;letter-spacing:0.95px">6,879</span><span class="B" style="left:950px;width:42.23px;letter-spacing:0.03px">7,211</span><span class="B" style="left:1000px;width:42.69px;letter-spacing:0.49px">7,571</span><span class="B" style="left:1050px;width:43.15px;letter-spacing:0.95px">7,935</span></div>
<div class="w" style="top:853.65px"><span class="LB">Non-Current Assets</span></div>
<div class="w" style="top:865.65px"><span class="L">PP&amp;E</span><span class="U">MXN mm</span><span class="R g" style="left:400px;width:43.73px;letter-spacing:-0.47px">9,212</span><span class="R g" style="left:450px;width:44.16px;letter-spacing:-0.04px">9,332</span><span class="R g" style="left:500px;width:43.11px;letter-spacing:-1.09px">10,311</span><span class="R u" style="left:550px;width:43.46px;letter-spacing:-0.74px">13,108</span><span class="R g" style="left:600px;width:43.82px;letter-spacing:-0.38px">13,850</span><span class="R g" style="left:650px;width:43.46px;letter-spacing:-0.74px">14,361</span><span class="R g" style="left:700px;width:43.82px;letter-spacing:-0.38px">14,608</span><span class="R g" style="left:750px;width:43.82px;letter-spacing:-0.38px">14,576</span><span class="R g" style="left:800px;width:43.82px;letter-spacing:-0.38px">14,259</span><span class="R g" style="left:850px;width:43.46px;letter-spacing:-0.74px">13,641</span><span class="R g" style="left:900px;width:43.82px;letter-spacing:-0.38px">12,707</span><span class="R g" style="left:950px;width:43.82px;letter-spacing:-0.38px">13,308</span><span class="R g" style="left:1000px;width:43.82px;letter-spacing:-0.38px">13,945</span><span class="R g" style="left:1050px;width:43.82px;letter-spacing:-0.38px">14,623</span></div>
<div class="w" style="top:877.65px"><span class="L">Intangibles</span><span class="U">MXN mm</span><span class="R g" style="left:400px;width:43.73px;letter-spacing:-0.47px">5,691</span><span class="R g" style="left:450px;width:44.16px;letter-spacing:-0.04px">5,643</span><span class="R g" style="left:500px;width:44.16px;letter-spacing:-0.04px">5,657</span><span class="R u" style="left:550px;width:43.73px;letter-spacing:-0.47px">7,134</span><span class="R g" style="left:600px;width:44.16px;letter-spacing:-0.04px">6,958</span><span class="R g" style="left:650px;width:43.73px;letter-spacing:-0.47px">6,771</span><span class="R g" style="left:700px;width:44.16px;letter-spacing:-0.04px">6,570</span><span class="R g" style="left:750px;width:44.16px;letter-spacing:-0.04px">6,356</span><span class="R g" style="left:800px;width:43.73px;letter-spacing:-0.47px">6,130</span><span class="R g" style="left:850px;width:44.16px;letter-spacing:-0.04px">5,890</span><span class="R g" style="left:900px;width:44.16px;letter-spacing:-0.04px">5,635</span><span class="R g" style="left:950px;width:44.16px;letter-spacing:-0.04px">5,668</span><span class="R g" style="left:1000px;width:44.16px;letter-spacing:-0.04px">5,702</span><span class="R g" style="left:1050px;width:44.16px;letter-spacing:-0.04px">5,739</span></div>
<div class="w" style="top:889.65px"><span class="L">Long Term Investments</span><span class="U">MXN mm</span><span class="R g" style="left:400px;width:44.31px;letter-spacing:0.11px">3</span><span class="R g" style="left:450px;width:44.31px;letter-spacing:0.11px">3</span><span class="R g" style="left:500px;width:44.31px;letter-spacing:0.11px">3</span><span class="R u" style="left:550px;width:44.31px;letter-spacing:0.11px">0</span><span class="R g" style="left:600px;width:44.31px;letter-spacing:0.11px">0</span><span class="R g" style="left:650px;width:44.31px;letter-spacing:0.11px">0</span><span class="R g" style="left:700px;width:44.31px;letter-spacing:0.11px">0</span><span class="R g" style="left:750px;width:44.31px;letter-spacing:0.11px">0</span><span class="R g" style="left:800px;width:44.31px;letter-spacing:0.11px">0</span><span class="R g" style="left:850px;width:44.31px;letter-spacing:0.11px">0</span><span class="R g" style="left:900px;width:44.31px;letter-spacing:0.11px">0</span><span class="R g" style="left:950px;width:44.31px;letter-spacing:0.11px">0</span><span class="R g" style="left:1000px;width:44.31px;letter-spacing:0.11px">0</span><span class="R g" style="left:1050px;width:44.31px;letter-spacing:0.11px">0</span></div>
<div class="w" style="top:901.65px"><span class="L">Derivative Investments</span><span class="U">MXN mm</span><span class="R g" style="left:450px;width:44.31px;letter-spacing:0.11px">0</span><span class="R g" style="left:500px;width:44.31px;letter-spacing:0.11px">44</span><span class="R u" style="left:550px;width:44.31px;letter-spacing:0.11px">73</span><span class="R g" style="left:600px;width:44.31px;letter-spacing:0.11px">75</span><span class="R g" style="left:650px;width:44.31px;letter-spacing:0.11px">79</span><span class="R g" style="left:700px;width:44.31px;letter-spacing:0.11px">83</span><span class="R g" style="left:750px;width:44.31px;letter-spacing:0.11px">88</span><span class="R g" style="left:800px;width:44.31px;letter-spacing:0.11px">93</span><span class="R g" style="left:850px;width:44.31px;letter-spacing:0.11px">97</span><span class="R g" style="left:900px;width:43.59px;letter-spacing:-0.61px">103</span><span class="R g" style="left:950px;width:43.59px;letter-spacing:-0.61px">108</span><span class="R g" style="left:1000px;width:42.87px;letter-spacing:-1.33px">113</span><span class="R g" style="left:1050px;width:42.87px;letter-spacing:-1.33px">119</span></div>
<div class="w" style="top:913.65px"><span class="L">Prepayments</span><span class="U">MXN mm</span><span class="R g" style="left:400px;width:43.59px;letter-spacing:-0.61px">128</span><span class="R g" style="left:450px;width:43.59px;letter-spacing:-0.61px">122</span><span class="R g" style="left:500px;width:44.31px;letter-spacing:0.11px">7</span><span class="R u" style="left:550px;width:44.31px;letter-spacing:0.11px">34</span><span class="R g" style="left:600px;width:44.31px;letter-spacing:0.11px">35</span><span class="R g" style="left:650px;width:44.31px;letter-spacing:0.11px">36</span><span class="R g" style="left:700px;width:44.31px;letter-spacing:0.11px">38</span><span class="R g" style="left:750px;width:44.31px;letter-spacing:0.11px">40</span><span class="R g" style="left:800px;width:44.31px;letter-spacing:0.11px">43</span><span class="R g" style="left:850px;width:44.31px;letter-spacing:0.11px">45</span><span class="R g" style="left:900px;width:44.31px;letter-spacing:0.11px">47</span><span class="R g" style="left:950px;width:44.31px;letter-spacing:0.11px">49</span><span class="R g" style="left:1000px;width:44.31px;letter-spacing:0.11px">52</span><span class="R g" style="left:1050px;width:44.31px;letter-spacing:0.11px">55</span></div>
<div class="w" style="top:925.65px"><span class="L">Restricted Cash</span><span class="U">MXN mm</span><span class="R g" style="left:450px;width:44.31px;letter-spacing:0.11px">67</span><span class="R g" style="left:500px;width:43.59px;letter-spacing:-0.61px">152</span><span class="R u" style="left:550px;width:43.59px;letter-spacing:-0.61px">126</span><span class="R g" style="left:600px;width:43.59px;letter-spacing:-0.61px">130</span><span class="R g" style="left:650px;width:43.59px;letter-spacing:-0.61px">137</span><span class="R g" style="left:700px;width:43.59px;letter-spacing:-0.61px">143</span><span class="R g" style="left:750px;width:42.87px;letter-spacing:-1.33px">151</span><span class="R g" style="left:800px;width:43.59px;letter-spacing:-0.61px">160</span><span class="R g" style="left:850px;width:43.59px;letter-spacing:-0.61px">168</span><span class="R g" style="left:900px;width:43.59px;letter-spacing:-0.61px">177</span><span class="R g" style="left:950px;width:43.59px;letter-spacing:-0.61px">186</span><span class="R g" style="left:1000px;width:43.59px;letter-spacing:-0.61px">195</span><span class="R g" style="left:1050px;width:44.31px;letter-spacing:0.11px">205</span></div>
<div class="w" style="top:937.65px"><span class="L">Deferred Tax Assets</span><span class="U">MXN mm</span><span class="R g" style="left:400px;width:44.31px;letter-spacing:0.11px">370</span><span class="R g" style="left:450px;width:43.59px;letter-spacing:-0.61px">251</span><span class="R g" style="left:500px;width:43.59px;letter-spacing:-0.61px">172</span><span class="R u" style="left:550px;width:44.31px;letter-spacing:0.11px">279</span><span class="R g" style="left:600px;width:44.31px;letter-spacing:0.11px">287</span><span class="R g" style="left:650px;width:44.31px;letter-spacing:0.11px">302</span><span class="R g" style="left:700px;width:43.59px;letter-spacing:-0.61px">316</span><span class="R g" style="left:750px;width:44.31px;letter-spacing:0.11px">334</span><span class="R g" style="left:800px;width:44.31px;letter-spacing:0.11px">353</span><span class="R g" style="left:850px;width:43.59px;letter-spacing:-0.61px">371</span><span class="R g" style="left:900px;width:44.31px;letter-spacing:0.11px">390</span><span class="R g" style="left:950px;width:43.59px;letter-spacing:-0.61px">410</span><span class="R g" style="left:1000px;width:43.59px;letter-spacing:-0.61px">431</span><span class="R g" style="left:1050px;width:44.31px;letter-spacing:0.11px">453</span></div>
<div class="q" style="left:63px;top:948.15px;width:1037px;height:12.0px;background:#efefef"></div>
<div class="w" style="top:949.65px"><span class="LB">Total Non-Current Assets</span><span class="UB">MXN mm</span><span class="B" style="left:400px;width:42.80px;letter-spacing:0.60px">15,405</span><span class="B" style="left:450px;width:42.42px;letter-spacing:0.22px">15,418</span><span class="B" style="left:500px;width:42.80px;letter-spacing:0.60px">16,347</span><span class="B" style="left:550px;width:43.18px;letter-spacing:0.98px">20,754</span><span class="B" style="left:600px;width:42.80px;letter-spacing:0.60px">21,335</span><span class="B" style="left:650px;width:42.80px;letter-spacing:0.60px">21,687</span><span class="B" style="left:700px;width:42.80px;letter-spacing:0.60px">21,757</span><span class="B" style="left:750px;width:42.80px;letter-spacing:0.60px">21,546</span><span class="B" style="left:800px;width:42.80px;letter-spacing:0.60px">21,037</span><span class="B" style="left:850px;width:42.80px;letter-spacing:0.60px">20,213</span><span class="B" style="left:900px;width:42.80px;letter-spacing:0.60px">19,058</span><span class="B" style="left:950px;width:42.80px;letter-spacing:0.60px">19,728</span><span class="B" style="left:1000px;width:43.18px;letter-spacing:0.98px">20,438</span><span class="B" style="left:1050px;width:42.42px;letter-spacing:0.22px">21,194</span></div>
<div class="q" style="left:63px;top:960.15px;width:1037px;height:12.0px;background:#efefef"></div>
<div class="w" style="top:961.65px"><span style="left:54.5px;font-size:9.5px;color:#111">x</span><span class="LB">Total Assets</span><span class="UB">MXN mm</span><span class="B" style="left:400px;width:42.42px;letter-spacing:0.22px">19,104</span><span class="B" style="left:450px;width:42.80px;letter-spacing:0.60px">21,092</span><span class="B" style="left:500px;width:43.18px;letter-spacing:0.98px">22,003</span><span class="B" style="left:550px;width:43.18px;letter-spacing:0.98px">26,809</span><span class="B" style="left:600px;width:43.18px;letter-spacing:0.98px">26,459</span><span class="B" style="left:650px;width:43.18px;letter-spacing:0.98px">27,056</span><span class="B" style="left:700px;width:43.18px;letter-spacing:0.98px">27,365</span><span class="B" style="left:750px;width:43.18px;letter-spacing:0.98px">27,459</span><span class="B" style="left:800px;width:43.18px;letter-spacing:0.98px">27,274</span><span class="B" style="left:850px;width:43.18px;letter-spacing:0.98px">26,754</span><span class="B" style="left:900px;width:43.18px;letter-spacing:0.98px">25,937</span><span class="B" style="left:950px;width:43.18px;letter-spacing:0.98px">26,939</span><span class="B" style="left:1000px;width:43.18px;letter-spacing:0.98px">28,009</span><span class="B" style="left:1050px;width:42.80px;letter-spacing:0.60px">29,130</span></div>
<div class="w" style="top:974.7px"><span class="LB">Current Liabilities</span></div>
<div class="w" style="top:986.7px"><span class="L">Revolver</span><span class="U">MXN mm</span><span class="R g" style="left:600px;width:44.31px;letter-spacing:0.11px">0</span><span class="R g" style="left:650px;width:44.31px;letter-spacing:0.11px">0</span><span class="R g" style="left:700px;width:44.31px;letter-spacing:0.11px">0</span><span class="R g" style="left:750px;width:44.31px;letter-spacing:0.11px">0</span><span class="R g" style="left:800px;width:44.31px;letter-spacing:0.11px">0</span><span class="R g" style="left:850px;width:44.31px;letter-spacing:0.11px">0</span><span class="R g" style="left:900px;width:44.31px;letter-spacing:0.11px">0</span><span class="R g" style="left:950px;width:44.31px;letter-spacing:0.11px">0</span><span class="R g" style="left:1000px;width:44.31px;letter-spacing:0.11px">0</span><span class="R g" style="left:1050px;width:44.31px;letter-spacing:0.11px">0</span></div>
<div class="w" style="top:998.7px"><span class="L">Accounts Payable</span><span class="U">MXN mm</span><span class="R g" style="left:400px;width:43.59px;letter-spacing:-0.61px">551</span><span class="R g" style="left:450px;width:44.31px;letter-spacing:0.11px">939</span><span class="R g" style="left:500px;width:43.30px;letter-spacing:-0.90px">1,361</span><span class="R u" style="left:550px;width:43.73px;letter-spacing:-0.47px">2,183</span><span class="R g" style="left:600px;width:43.73px;letter-spacing:-0.47px">1,554</span><span class="R g" style="left:650px;width:43.73px;letter-spacing:-0.47px">1,596</span><span class="R g" style="left:700px;width:43.73px;letter-spacing:-0.47px">1,638</span><span class="R g" style="left:750px;width:43.73px;letter-spacing:-0.47px">1,709</span><span class="R g" style="left:800px;width:43.73px;letter-spacing:-0.47px">1,782</span><span class="R g" style="left:850px;width:43.73px;letter-spacing:-0.47px">1,848</span><span class="R g" style="left:900px;width:43.73px;letter-spacing:-0.47px">1,925</span><span class="R g" style="left:950px;width:43.73px;letter-spacing:-0.47px">1,998</span><span class="R g" style="left:1000px;width:44.16px;letter-spacing:-0.04px">2,077</span><span class="R g" style="left:1050px;width:43.73px;letter-spacing:-0.47px">2,153</span></div>
<div class="w" style="top:1010.7px"><span class="L">Related Parties</span><span class="U">MXN mm</span><span class="R g" style="left:400px;width:44.31px;letter-spacing:0.11px">2</span><span class="R g" style="left:450px;width:44.31px;letter-spacing:0.11px">5</span><span class="R g" style="left:500px;width:42.16px;letter-spacing:-2.04px">1</span><span class="R u" style="left:550px;width:44.31px;letter-spacing:0.11px">0</span><span class="R g" style="left:600px;width:44.31px;letter-spacing:0.11px">0</span><span class="R g" style="left:650px;width:44.31px;letter-spacing:0.11px">0</span><span class="R g" style="left:700px;width:44.31px;letter-spacing:0.11px">0</span><span class="R g" style="left:750px;width:44.31px;letter-spacing:0.11px">0</span><span class="R g" style="left:800px;width:44.31px;letter-spacing:0.11px">0</span><span class="R g" style="left:850px;width:44.31px;letter-spacing:0.11px">0</span><span class="R g" style="left:900px;width:44.31px;letter-spacing:0.11px">0</span><span class="R g" style="left:950px;width:44.31px;letter-spacing:0.11px">0</span><span class="R g" style="left:1000px;width:44.31px;letter-spacing:0.11px">0</span><span class="R g" style="left:1050px;width:44.31px;letter-spacing:0.11px">0</span></div>
<div class="w" style="top:1022.7px"><span class="L">Taxes Payable</span><span class="U">MXN mm</span><span class="R g" style="left:400px;width:44.31px;letter-spacing:0.11px">632</span><span class="R g" style="left:450px;width:44.31px;letter-spacing:0.11px">780</span><span class="R g" style="left:500px;width:44.31px;letter-spacing:0.11px">663</span><span class="R u" style="left:550px;width:44.31px;letter-spacing:0.11px">935</span><span class="R g" style="left:600px;width:44.31px;letter-spacing:0.11px">963</span><span class="R g" style="left:650px;width:43.30px;letter-spacing:-0.90px">1,014</span><span class="R g" style="left:700px;width:43.73px;letter-spacing:-0.47px">1,059</span><span class="R g" style="left:750px;width:42.87px;letter-spacing:-1.33px">1,119</span><span class="R g" style="left:800px;width:43.30px;letter-spacing:-0.90px">1,183</span><span class="R g" style="left:850px;width:43.73px;letter-spacing:-0.47px">1,245</span><span class="R g" style="left:900px;width:43.73px;letter-spacing:-0.47px">1,309</span><span class="R g" style="left:950px;width:43.73px;letter-spacing:-0.47px">1,374</span><span class="R g" style="left:1000px;width:43.73px;letter-spacing:-0.47px">1,445</span><span class="R g" style="left:1050px;width:43.30px;letter-spacing:-0.90px">1,521</span></div>
<div class="w" style="top:1034.7px"><span class="L">Other Payable</span><span class="U">MXN mm</span><span class="R g" style="left:400px;width:44.31px;letter-spacing:0.11px">88</span><span class="R g" style="left:450px;width:43.59px;letter-spacing:-0.61px">108</span><span class="R g" style="left:500px;width:44.31px;letter-spacing:0.11px">59</span><span class="R u" style="left:550px;width:43.73px;letter-spacing:-0.47px">1,674</span><span class="R g" style="left:600px;width:43.73px;letter-spacing:-0.47px">1,725</span><span class="R g" style="left:650px;width:43.30px;letter-spacing:-0.90px">1,816</span><span class="R g" style="left:700px;width:43.73px;letter-spacing:-0.47px">1,897</span><span class="R g" style="left:750px;width:44.16px;letter-spacing:-0.04px">2,005</span><span class="R g" style="left:800px;width:43.30px;letter-spacing:-0.90px">2,119</span><span class="R g" style="left:850px;width:43.73px;letter-spacing:-0.47px">2,231</span><span class="R g" style="left:900px;width:44.16px;letter-spacing:-0.04px">2,345</span><span class="R g" style="left:950px;width:44.16px;letter-spacing:-0.04px">2,463</span><span class="R g" style="left:1000px;width:44.16px;letter-spacing:-0.04px">2,590</span><span class="R g" style="left:1050px;width:44.16px;letter-spacing:-0.04px">2,724</span></div>
<div class="w" style="top:1046.7px"><span class="L">Current Portion of Long Term Debt and Capital l</span><span class="U">MXN mm</span><span class="R g" style="left:400px;width:43.73px;letter-spacing:-0.47px">1,705</span><span class="R g" style="left:450px;width:43.73px;letter-spacing:-0.47px">1,338</span><span class="R g" style="left:500px;width:43.59px;letter-spacing:-0.61px">951</span><span class="R u" style="left:550px;width:44.31px;letter-spacing:0.11px">0</span><span class="R g" style="left:600px;width:44.31px;letter-spacing:0.11px">0</span><span class="R g" style="left:650px;width:44.31px;letter-spacing:0.11px">0</span><span class="R g" style="left:700px;width:44.31px;letter-spacing:0.11px">0</span><span class="R g" style="left:750px;width:44.31px;letter-spacing:0.11px">0</span><span class="R g" style="left:800px;width:44.31px;letter-spacing:0.11px">0</span><span class="R g" style="left:850px;width:44.31px;letter-spacing:0.11px">0</span><span class="R g" style="left:900px;width:44.31px;letter-spacing:0.11px">0</span><span class="R g" style="left:950px;width:44.31px;letter-spacing:0.11px">0</span><span class="R g" style="left:1000px;width:44.31px;letter-spacing:0.11px">0</span><span class="R g" style="left:1050px;width:44.31px;letter-spacing:0.11px">0</span></div>
<div class="w" style="top:1058.7px"><span class="L">Provisions</span><span class="U">MXN mm</span><span class="R g" style="left:400px;width:44.31px;letter-spacing:0.11px">474</span><span class="R g" style="left:450px;width:44.31px;letter-spacing:0.11px">658</span><span class="R g" style="left:500px;width:44.31px;letter-spacing:0.11px">659</span><span class="R u" style="left:550px;width:44.31px;letter-spacing:0.11px">657</span><span class="R g" style="left:600px;width:44.31px;letter-spacing:0.11px">677</span><span class="R g" style="left:650px;width:43.59px;letter-spacing:-0.61px">712</span><span class="R g" style="left:700px;width:44.31px;letter-spacing:0.11px">744</span><span class="R g" style="left:750px;width:44.31px;letter-spacing:0.11px">786</span><span class="R g" style="left:800px;width:43.59px;letter-spacing:-0.61px">831</span><span class="R g" style="left:850px;width:44.31px;letter-spacing:0.11px">875</span><span class="R g" style="left:900px;width:44.31px;letter-spacing:0.11px">920</span><span class="R g" style="left:950px;width:44.31px;letter-spacing:0.11px">966</span><span class="R g" style="left:1000px;width:43.30px;letter-spacing:-0.90px">1,015</span><span class="R g" style="left:1050px;width:43.73px;letter-spacing:-0.47px">1,068</span></div>
<div class="w" style="top:1070.7px"><span class="L">Deferred Liabilities</span><span class="U">MXN mm</span><span class="R g" style="left:400px;width:44.31px;letter-spacing:0.11px">64</span><span class="R g" style="left:450px;width:44.31px;letter-spacing:0.11px">79</span><span class="R g" style="left:500px;width:44.31px;letter-spacing:0.11px">43</span><span class="R u" style="left:550px;width:44.31px;letter-spacing:0.11px">0</span><span class="R g" style="left:600px;width:44.31px;letter-spacing:0.11px">0</span><span class="R g" style="left:650px;width:44.31px;letter-spacing:0.11px">0</span><span class="R g" style="left:700px;width:44.31px;letter-spacing:0.11px">0</span><span class="R g" style="left:750px;width:44.31px;letter-spacing:0.11px">0</span><span class="R g" style="left:800px;width:44.31px;letter-spacing:0.11px">0</span><span class="R g" style="left:850px;width:44.31px;letter-spacing:0.11px">0</span><span class="R g" style="left:900px;width:44.31px;letter-spacing:0.11px">0</span><span class="R g" style="left:950px;width:44.31px;letter-spacing:0.11px">0</span><span class="R g" style="left:1000px;width:44.31px;letter-spacing:0.11px">0</span><span class="R g" style="left:1050px;width:44.31px;letter-spacing:0.11px">0</span></div>
<div class="q" style="left:63px;top:1081.2px;width:1037px;height:12.0px;background:#efefef"></div>
<div class="w" style="top:1082.7px"><span style="left:54.5px;font-size:9.5px;color:#111">x</span><span class="LB">Total Current Liabilities</span><span class="UB">MXN mm</span><span class="B" style="left:400px;width:42.69px;letter-spacing:0.49px">3,516</span><span class="B" style="left:450px;width:43.15px;letter-spacing:0.95px">3,908</span><span class="B" style="left:500px;width:43.15px;letter-spacing:0.95px">3,737</span><span class="B" style="left:550px;width:43.15px;letter-spacing:0.95px">5,449</span><span class="B" style="left:600px;width:42.69px;letter-spacing:0.49px">4,919</span><span class="B" style="left:650px;width:42.69px;letter-spacing:0.49px">5,139</span><span class="B" style="left:700px;width:43.15px;letter-spacing:0.95px">5,338</span><span class="B" style="left:750px;width:42.69px;letter-spacing:0.49px">5,619</span><span class="B" style="left:800px;width:42.69px;letter-spacing:0.49px">5,914</span><span class="B" style="left:850px;width:42.69px;letter-spacing:0.49px">6,199</span><span class="B" style="left:900px;width:43.15px;letter-spacing:0.95px">6,499</span><span class="B" style="left:950px;width:42.69px;letter-spacing:0.49px">6,801</span><span class="B" style="left:1000px;width:42.69px;letter-spacing:0.49px">7,127</span><span class="B" style="left:1050px;width:43.15px;letter-spacing:0.95px">7,466</span></div>
<div class="w" style="top:1095.75px"><span class="LB">Non-Current Liabilities</span></div>
<div class="w" style="top:1107.75px"><span class="L">Long Term Debt and Capital Lease Obligation</span><span class="U">MXN mm</span><span class="R g" style="left:400px;width:44.16px;letter-spacing:-0.04px">4,445</span><span class="R g" style="left:450px;width:44.16px;letter-spacing:-0.04px">5,575</span><span class="R g" style="left:500px;width:44.16px;letter-spacing:-0.04px">6,360</span><span class="R u" style="left:550px;width:43.73px;letter-spacing:-0.47px">9,160</span><span class="R g" style="left:600px;width:43.73px;letter-spacing:-0.47px">9,137</span><span class="R g" style="left:650px;width:44.16px;letter-spacing:-0.04px">8,956</span><span class="R g" style="left:700px;width:44.16px;letter-spacing:-0.04px">8,596</span><span class="R g" style="left:750px;width:44.16px;letter-spacing:-0.04px">8,050</span><span class="R g" style="left:800px;width:43.73px;letter-spacing:-0.47px">7,312</span><span class="R g" style="left:850px;width:43.73px;letter-spacing:-0.47px">6,371</span><span class="R g" style="left:900px;width:44.16px;letter-spacing:-0.04px">5,440</span><span class="R g" style="left:950px;width:43.73px;letter-spacing:-0.47px">4,519</span><span class="R g" style="left:1000px;width:44.16px;letter-spacing:-0.04px">4,758</span><span class="R g" style="left:1050px;width:43.30px;letter-spacing:-0.90px">5,011</span></div>
<div class="w" style="top:1119.75px"><span class="L">Derivative and Hedging Liabilities</span><span class="U">MXN mm</span><span class="R g" style="left:400px;width:44.31px;letter-spacing:0.11px">52</span><span class="R g" style="left:450px;width:43.23px;letter-spacing:-0.97px">41</span><span class="R g" style="left:500px;width:44.31px;letter-spacing:0.11px">4</span><span class="R u" style="left:550px;width:44.31px;letter-spacing:0.11px">0</span><span class="R g" style="left:600px;width:44.31px;letter-spacing:0.11px">0</span><span class="R g" style="left:650px;width:44.31px;letter-spacing:0.11px">0</span><span class="R g" style="left:700px;width:44.31px;letter-spacing:0.11px">0</span><span class="R g" style="left:750px;width:44.31px;letter-spacing:0.11px">0</span><span class="R g" style="left:800px;width:44.31px;letter-spacing:0.11px">0</span><span class="R g" style="left:850px;width:44.31px;letter-spacing:0.11px">0</span><span class="R g" style="left:900px;width:44.31px;letter-spacing:0.11px">0</span><span class="R g" style="left:950px;width:44.31px;letter-spacing:0.11px">0</span><span class="R g" style="left:1000px;width:44.31px;letter-spacing:0.11px">0</span><span class="R g" style="left:1050px;width:44.31px;letter-spacing:0.11px">0</span></div>
<div class="w" style="top:1131.75px"><span class="L">Employee Provisions</span><span class="U">MXN mm</span><span class="R g" style="left:400px;width:44.31px;letter-spacing:0.11px">75</span><span class="R g" style="left:450px;width:43.59px;letter-spacing:-0.61px">108</span><span class="R g" style="left:500px;width:44.31px;letter-spacing:0.11px">98</span><span class="R u" style="left:550px;width:42.87px;letter-spacing:-1.33px">110</span><span class="R g" style="left:600px;width:42.87px;letter-spacing:-1.33px">113</span><span class="R g" style="left:650px;width:42.87px;letter-spacing:-1.33px">119</span><span class="R g" style="left:700px;width:43.59px;letter-spacing:-0.61px">124</span><span class="R g" style="left:750px;width:43.59px;letter-spacing:-0.61px">132</span><span class="R g" style="left:800px;width:43.59px;letter-spacing:-0.61px">139</span><span class="R g" style="left:850px;width:43.59px;letter-spacing:-0.61px">146</span><span class="R g" style="left:900px;width:43.59px;letter-spacing:-0.61px">154</span><span class="R g" style="left:950px;width:43.59px;letter-spacing:-0.61px">162</span><span class="R g" style="left:1000px;width:43.59px;letter-spacing:-0.61px">170</span><span class="R g" style="left:1050px;width:43.59px;letter-spacing:-0.61px">179</span></div>
<div class="w" style="top:1143.75px"><span class="L">Deferred Tax Liabilities</span><span class="U">MXN mm</span><span class="R g" style="left:400px;width:43.59px;letter-spacing:-0.61px">712</span><span class="R g" style="left:450px;width:44.31px;letter-spacing:0.11px">620</span><span class="R g" style="left:500px;width:44.31px;letter-spacing:0.11px">698</span><span class="R u" style="left:550px;width:44.31px;letter-spacing:0.11px">926</span><span class="R g" style="left:600px;width:44.31px;letter-spacing:0.11px">954</span><span class="R g" style="left:650px;width:43.73px;letter-spacing:-0.47px">1,004</span><span class="R g" style="left:700px;width:43.73px;letter-spacing:-0.47px">1,049</span><span class="R g" style="left:750px;width:43.30px;letter-spacing:-0.90px">1,108</span><span class="R g" style="left:800px;width:42.87px;letter-spacing:-1.33px">1,171</span><span class="R g" style="left:850px;width:43.73px;letter-spacing:-0.47px">1,233</span><span class="R g" style="left:900px;width:43.73px;letter-spacing:-0.47px">1,296</span><span class="R g" style="left:950px;width:43.30px;letter-spacing:-0.90px">1,361</span><span class="R g" style="left:1000px;width:43.30px;letter-spacing:-0.90px">1,431</span><span class="R g" style="left:1050px;width:43.73px;letter-spacing:-0.47px">1,506</span></div>
<div class="q" style="left:63px;top:1154.25px;width:1037px;height:12.0px;background:#efefef"></div>
<div class="w" style="top:1155.75px"><span class="LB">Total Non-Current Liabilities</span><span class="UB">MXN mm</span><span class="B" style="left:400px;width:43.15px;letter-spacing:0.95px">5,284</span><span class="B" style="left:450px;width:43.15px;letter-spacing:0.95px">6,344</span><span class="B" style="left:500px;width:42.69px;letter-spacing:0.49px">7,160</span><span class="B" style="left:550px;width:42.42px;letter-spacing:0.22px">10,195</span><span class="B" style="left:600px;width:42.80px;letter-spacing:0.60px">10,204</span><span class="B" style="left:650px;width:42.80px;letter-spacing:0.60px">10,079</span><span class="B" style="left:700px;width:43.15px;letter-spacing:0.95px">9,769</span><span class="B" style="left:750px;width:43.15px;letter-spacing:0.95px">9,290</span><span class="B" style="left:800px;width:43.15px;letter-spacing:0.95px">8,622</span><span class="B" style="left:850px;width:43.15px;letter-spacing:0.95px">7,750</span><span class="B" style="left:900px;width:43.15px;letter-spacing:0.95px">6,890</span><span class="B" style="left:950px;width:43.15px;letter-spacing:0.95px">6,042</span><span class="B" style="left:1000px;width:43.15px;letter-spacing:0.95px">6,359</span><span class="B" style="left:1050px;width:43.15px;letter-spacing:0.95px">6,696</span></div>
<div class="q" style="left:63px;top:1166.25px;width:1037px;height:12.0px;background:#efefef"></div>
<div class="w" style="top:1167.75px"><span style="left:54.5px;font-size:9.5px;color:#111">x</span><span class="LB">Total Liabilities</span><span class="UB">MXN mm</span><span class="B" style="left:400px;width:42.69px;letter-spacing:0.49px">8,801</span><span class="B" style="left:450px;width:42.80px;letter-spacing:0.60px">10,252</span><span class="B" style="left:500px;width:42.80px;letter-spacing:0.60px">10,897</span><span class="B" style="left:550px;width:42.80px;letter-spacing:0.60px">15,644</span><span class="B" style="left:600px;width:42.42px;letter-spacing:0.22px">15,123</span><span class="B" style="left:650px;width:42.42px;letter-spacing:0.22px">15,218</span><span class="B" style="left:700px;width:42.42px;letter-spacing:0.22px">15,107</span><span class="B" style="left:750px;width:42.80px;letter-spacing:0.60px">14,909</span><span class="B" style="left:800px;width:42.80px;letter-spacing:0.60px">14,537</span><span class="B" style="left:850px;width:42.80px;letter-spacing:0.60px">13,949</span><span class="B" style="left:900px;width:42.80px;letter-spacing:0.60px">13,389</span><span class="B" style="left:950px;width:42.80px;letter-spacing:0.60px">12,843</span><span class="B" style="left:1000px;width:42.80px;letter-spacing:0.60px">13,486</span><span class="B" style="left:1050px;width:42.42px;letter-spacing:0.22px">14,162</span></div>
<div class="w" style="top:1179.8px"><span class="LB">Equity</span></div>
<div class="w" style="top:1191.8px"><span class="L">Capital Stock</span><span class="U">MXN mm</span><span class="R g" style="left:400px;width:44.16px;letter-spacing:-0.04px">8,735</span><span class="R g" style="left:450px;width:43.73px;letter-spacing:-0.47px">8,491</span><span class="R g" style="left:500px;width:44.16px;letter-spacing:-0.04px">7,938</span><span class="R u" style="left:550px;width:43.73px;letter-spacing:-0.47px">7,551</span><span class="R g" style="left:600px;width:43.73px;letter-spacing:-0.47px">7,551</span><span class="R g" style="left:650px;width:43.73px;letter-spacing:-0.47px">7,551</span><span class="R g" style="left:700px;width:43.73px;letter-spacing:-0.47px">7,551</span><span class="R g" style="left:750px;width:43.73px;letter-spacing:-0.47px">7,551</span><span class="R g" style="left:800px;width:43.73px;letter-spacing:-0.47px">7,551</span><span class="R g" style="left:850px;width:43.73px;letter-spacing:-0.47px">7,551</span><span class="R g" style="left:900px;width:43.73px;letter-spacing:-0.47px">7,551</span><span class="R g" style="left:950px;width:43.73px;letter-spacing:-0.47px">7,551</span><span class="R g" style="left:1000px;width:43.73px;letter-spacing:-0.47px">7,551</span><span class="R g" style="left:1050px;width:43.73px;letter-spacing:-0.47px">7,551</span></div>
<div class="w" style="top:1203.8px"><span class="L">Retained Earnings</span><span class="U">MXN mm</span><span class="R g" style="left:400px;width:43.30px;letter-spacing:-0.90px">1,189</span><span class="R g" style="left:450px;width:43.73px;letter-spacing:-0.47px">1,822</span><span class="R g" style="left:500px;width:43.73px;letter-spacing:-0.47px">2,661</span><span class="R u" style="left:550px;width:43.73px;letter-spacing:-0.47px">3,614</span><span class="R g" style="left:600px;width:44.16px;letter-spacing:-0.04px">3,784</span><span class="R g" style="left:650px;width:44.16px;letter-spacing:-0.04px">4,287</span><span class="R g" style="left:700px;width:44.16px;letter-spacing:-0.04px">4,707</span><span class="R g" style="left:750px;width:44.16px;letter-spacing:-0.04px">4,999</span><span class="R g" style="left:800px;width:43.73px;letter-spacing:-0.47px">5,186</span><span class="R g" style="left:850px;width:44.16px;letter-spacing:-0.04px">5,253</span><span class="R g" style="left:900px;width:44.16px;letter-spacing:-0.04px">4,996</span><span class="R g" style="left:950px;width:44.16px;letter-spacing:-0.04px">6,545</span><span class="R g" style="left:1000px;width:43.73px;letter-spacing:-0.47px">6,971</span><span class="R g" style="left:1050px;width:43.73px;letter-spacing:-0.47px">7,416</span></div>
<div class="w" style="top:1215.8px"><span class="L">Total Reserves</span><span class="U">MXN mm</span><span class="R g" style="left:400px;width:44.31px;letter-spacing:0.11px">5</span><span class="R g" style="left:450px;width:44.31px;letter-spacing:0.11px">36</span><span class="R g" style="left:500px;width:43.59px;letter-spacing:-0.61px">105</span><span class="R u" style="left:550px;width:44.31px;letter-spacing:0.11px">0</span><span class="R g" style="left:600px;width:44.31px;letter-spacing:0.11px">0</span><span class="R g" style="left:650px;width:44.31px;letter-spacing:0.11px">0</span><span class="R g" style="left:700px;width:44.31px;letter-spacing:0.11px">0</span><span class="R g" style="left:750px;width:44.31px;letter-spacing:0.11px">0</span><span class="R g" style="left:800px;width:44.31px;letter-spacing:0.11px">0</span><span class="R g" style="left:850px;width:44.31px;letter-spacing:0.11px">0</span><span class="R g" style="left:900px;width:44.31px;letter-spacing:0.11px">0</span><span class="R g" style="left:950px;width:44.31px;letter-spacing:0.11px">0</span><span class="R g" style="left:1000px;width:44.31px;letter-spacing:0.11px">0</span><span class="R g" style="left:1050px;width:44.31px;letter-spacing:0.11px">0</span></div>
<div class="w" style="top:1227.8px"><span class="L">Other Equity Interest</span><span class="U">MXN mm</span><span class="R g" style="left:400px;width:44.31px;letter-spacing:0.11px">375</span><span class="R g" style="left:450px;width:44.31px;letter-spacing:0.11px">490</span><span class="R g" style="left:500px;width:44.31px;letter-spacing:0.11px">402</span><span class="R u" style="left:550px;width:44.31px;letter-spacing:0.11px">0</span><span class="R g" style="left:600px;width:44.31px;letter-spacing:0.11px">0</span><span class="R g" style="left:650px;width:44.31px;letter-spacing:0.11px">0</span><span class="R g" style="left:700px;width:44.31px;letter-spacing:0.11px">0</span><span class="R g" style="left:750px;width:44.31px;letter-spacing:0.11px">0</span><span class="R g" style="left:800px;width:44.31px;letter-spacing:0.11px">0</span><span class="R g" style="left:850px;width:44.31px;letter-spacing:0.11px">0</span><span class="R g" style="left:900px;width:44.31px;letter-spacing:0.11px">0</span><span class="R g" style="left:950px;width:44.31px;letter-spacing:0.11px">0</span><span class="R g" style="left:1000px;width:44.31px;letter-spacing:0.11px">0</span><span class="R g" style="left:1050px;width:44.31px;letter-spacing:0.11px">0</span></div>
<div class="q" style="left:63px;top:1239.3px;width:1037px;height:12.0px;background:#efefef"></div>
<div class="w" style="top:1239.8px"><span class="LB">Total Equity</span><span class="UB">MXN mm</span><span class="B" style="left:400px;width:42.80px;letter-spacing:0.60px">10,304</span><span class="B" style="left:450px;width:42.80px;letter-spacing:0.60px">10,839</span><span class="B" style="left:500px;width:42.03px;letter-spacing:-0.17px">11,106</span><span class="B" style="left:550px;width:42.03px;letter-spacing:-0.17px">11,165</span><span class="B" style="left:600px;width:42.42px;letter-spacing:0.22px">11,336</span><span class="B" style="left:650px;width:42.42px;letter-spacing:0.22px">11,839</span><span class="B" style="left:700px;width:42.80px;letter-spacing:0.60px">12,259</span><span class="B" style="left:750px;width:42.42px;letter-spacing:0.22px">12,551</span><span class="B" style="left:800px;width:42.80px;letter-spacing:0.60px">12,737</span><span class="B" style="left:850px;width:42.80px;letter-spacing:0.60px">12,805</span><span class="B" style="left:900px;width:42.80px;letter-spacing:0.60px">12,548</span><span class="B" style="left:950px;width:42.80px;letter-spacing:0.60px">14,096</span><span class="B" style="left:1000px;width:42.80px;letter-spacing:0.60px">14,523</span><span class="B" style="left:1050px;width:42.80px;letter-spacing:0.60px">14,967</span></div>
<div class="q" style="left:63px;top:1251.3px;width:1037px;height:12.0px;background:#efefef"></div>
<div class="w" style="top:1251.8px"><span style="left:54.5px;font-size:9.5px;color:#111">x</span><span class="LB">Total Equity + Liabilities</span><span class="UB">MXN mm</span><span class="B" style="left:400px;width:42.42px;letter-spacing:0.22px">19,104</span><span class="B" style="left:450px;width:42.80px;letter-spacing:0.60px">21,092</span><span class="B" style="left:500px;width:43.18px;letter-spacing:0.98px">22,003</span><span class="B" style="left:550px;width:43.18px;letter-spacing:0.98px">26,809</span><span class="B" style="left:600px;width:43.18px;letter-spacing:0.98px">26,459</span><span class="B" style="left:650px;width:43.18px;letter-spacing:0.98px">27,056</span><span class="B" style="left:700px;width:43.18px;letter-spacing:0.98px">27,365</span><span class="B" style="left:750px;width:43.18px;letter-spacing:0.98px">27,459</span><span class="B" style="left:800px;width:43.18px;letter-spacing:0.98px">27,274</span><span class="B" style="left:850px;width:43.18px;letter-spacing:0.98px">26,754</span><span class="B" style="left:900px;width:43.18px;letter-spacing:0.98px">25,937</span><span class="B" style="left:950px;width:43.18px;letter-spacing:0.98px">26,939</span><span class="B" style="left:1000px;width:43.18px;letter-spacing:0.98px">28,009</span><span class="B" style="left:1050px;width:42.80px;letter-spacing:0.60px">29,130</span></div>
<div class="w" style="top:1275.8px"><span class="LI">Check</span><span class="UI">--</span><span class="C" style="left:400px">Ok</span><span class="C" style="left:450px">Ok</span><span class="C" style="left:500px">Ok</span><span class="C" style="left:550px">Ok</span><span class="C" style="left:600px">Ok</span><span class="C" style="left:650px">Ok</span><span class="C" style="left:700px">Ok</span><span class="C" style="left:750px">Ok</span><span class="C" style="left:800px">Ok</span><span class="C" style="left:850px">Ok</span><span class="C" style="left:900px">Ok</span><span class="C" style="left:950px">Ok</span><span class="C" style="left:1000px">Ok</span><span class="C" style="left:1050px">Ok</span></div>
<div class="q" style="left:62.5px;top:659.1px;width:1037.5px;height:60.0px;border:1px dotted #333"></div>
<div class="q" style="left:599px;top:342.5px;width:1px;height:944.5px;border-left:1px dotted #111"></div>
<svg style="position:absolute;left:594px;top:439.0px" width="6" height="6"><path d="M0 0H5.5V5.5Z" fill="#d01010"/></svg>
<svg style="position:absolute;left:594px;top:463.92px" width="6" height="6"><path d="M0 0H5.5V5.5Z" fill="#d01010"/></svg>
<svg style="position:absolute;left:594px;top:500.84px" width="6" height="6"><path d="M0 0H5.5V5.5Z" fill="#d01010"/></svg>
<svg style="position:absolute;left:594px;top:537.76px" width="6" height="6"><path d="M0 0H5.5V5.5Z" fill="#d01010"/></svg>
<svg style="position:absolute;left:594px;top:574.68px" width="6" height="6"><path d="M0 0H5.5V5.5Z" fill="#d01010"/></svg>
<svg style="position:absolute;left:594px;top:586.68px" width="6" height="6"><path d="M0 0H5.5V5.5Z" fill="#d01010"/></svg>
<svg style="position:absolute;left:594px;top:611.6px" width="6" height="6"><path d="M0 0H5.5V5.5Z" fill="#d01010"/></svg>
<svg style="position:absolute;left:594px;top:755.6px" width="6" height="6"><path d="M0 0H5.5V5.5Z" fill="#d01010"/></svg>
<svg style="position:absolute;left:594px;top:767.6px" width="6" height="6"><path d="M0 0H5.5V5.5Z" fill="#d01010"/></svg>
<svg style="position:absolute;left:594px;top:779.6px" width="6" height="6"><path d="M0 0H5.5V5.5Z" fill="#d01010"/></svg>
<svg style="position:absolute;left:594px;top:791.6px" width="6" height="6"><path d="M0 0H5.5V5.5Z" fill="#d01010"/></svg>
<svg style="position:absolute;left:594px;top:803.6px" width="6" height="6"><path d="M0 0H5.5V5.5Z" fill="#d01010"/></svg>
<svg style="position:absolute;left:594px;top:815.6px" width="6" height="6"><path d="M0 0H5.5V5.5Z" fill="#d01010"/></svg>
<svg style="position:absolute;left:594px;top:827.6px" width="6" height="6"><path d="M0 0H5.5V5.5Z" fill="#d01010"/></svg>
<svg style="position:absolute;left:594px;top:864.65px" width="6" height="6"><path d="M0 0H5.5V5.5Z" fill="#d01010"/></svg>
<svg style="position:absolute;left:594px;top:876.65px" width="6" height="6"><path d="M0 0H5.5V5.5Z" fill="#d01010"/></svg>
<svg style="position:absolute;left:594px;top:888.65px" width="6" height="6"><path d="M0 0H5.5V5.5Z" fill="#d01010"/></svg>
<svg style="position:absolute;left:594px;top:900.65px" width="6" height="6"><path d="M0 0H5.5V5.5Z" fill="#d01010"/></svg>
<svg style="position:absolute;left:594px;top:912.65px" width="6" height="6"><path d="M0 0H5.5V5.5Z" fill="#d01010"/></svg>
<svg style="position:absolute;left:594px;top:924.65px" width="6" height="6"><path d="M0 0H5.5V5.5Z" fill="#d01010"/></svg>
<svg style="position:absolute;left:594px;top:936.65px" width="6" height="6"><path d="M0 0H5.5V5.5Z" fill="#d01010"/></svg>
<svg style="position:absolute;left:594px;top:997.7px" width="6" height="6"><path d="M0 0H5.5V5.5Z" fill="#d01010"/></svg>
<svg style="position:absolute;left:594px;top:1009.7px" width="6" height="6"><path d="M0 0H5.5V5.5Z" fill="#d01010"/></svg>
<svg style="position:absolute;left:594px;top:1021.7px" width="6" height="6"><path d="M0 0H5.5V5.5Z" fill="#d01010"/></svg>
<svg style="position:absolute;left:594px;top:1033.7px" width="6" height="6"><path d="M0 0H5.5V5.5Z" fill="#d01010"/></svg>
<svg style="position:absolute;left:594px;top:1045.7px" width="6" height="6"><path d="M0 0H5.5V5.5Z" fill="#d01010"/></svg>
<svg style="position:absolute;left:594px;top:1057.7px" width="6" height="6"><path d="M0 0H5.5V5.5Z" fill="#d01010"/></svg>
<svg style="position:absolute;left:594px;top:1069.7px" width="6" height="6"><path d="M0 0H5.5V5.5Z" fill="#d01010"/></svg>
<svg style="position:absolute;left:594px;top:1106.75px" width="6" height="6"><path d="M0 0H5.5V5.5Z" fill="#d01010"/></svg>
<svg style="position:absolute;left:594px;top:1118.75px" width="6" height="6"><path d="M0 0H5.5V5.5Z" fill="#d01010"/></svg>
<svg style="position:absolute;left:594px;top:1130.75px" width="6" height="6"><path d="M0 0H5.5V5.5Z" fill="#d01010"/></svg>
<svg style="position:absolute;left:594px;top:1142.75px" width="6" height="6"><path d="M0 0H5.5V5.5Z" fill="#d01010"/></svg>
<svg style="position:absolute;left:594px;top:1191.8px" width="6" height="6"><path d="M0 0H5.5V5.5Z" fill="#d01010"/></svg>
<svg style="position:absolute;left:594px;top:1203.8px" width="6" height="6"><path d="M0 0H5.5V5.5Z" fill="#d01010"/></svg>
<svg style="position:absolute;left:594px;top:1215.8px" width="6" height="6"><path d="M0 0H5.5V5.5Z" fill="#d01010"/></svg>
<svg style="position:absolute;left:594px;top:1227.8px" width="6" height="6"><path d="M0 0H5.5V5.5Z" fill="#d01010"/></svg>
<svg style="position:absolute;left:599.5px;top:1203.8px" width="6" height="6"><path d="M0 0H5L0 5Z" fill="#1e8a1e"/></svg>
<svg style="position:absolute;left:649.5px;top:1203.8px" width="6" height="6"><path d="M0 0H5L0 5Z" fill="#1e8a1e"/></svg>
<svg style="position:absolute;left:699.5px;top:1203.8px" width="6" height="6"><path d="M0 0H5L0 5Z" fill="#1e8a1e"/></svg>
<svg style="position:absolute;left:749.5px;top:1203.8px" width="6" height="6"><path d="M0 0H5L0 5Z" fill="#1e8a1e"/></svg>
<svg style="position:absolute;left:799.5px;top:1203.8px" width="6" height="6"><path d="M0 0H5L0 5Z" fill="#1e8a1e"/></svg>
<svg style="position:absolute;left:849.5px;top:1203.8px" width="6" height="6"><path d="M0 0H5L0 5Z" fill="#1e8a1e"/></svg>
<svg style="position:absolute;left:899.5px;top:1203.8px" width="6" height="6"><path d="M0 0H5L0 5Z" fill="#1e8a1e"/></svg>
<svg style="position:absolute;left:949.5px;top:1203.8px" width="6" height="6"><path d="M0 0H5L0 5Z" fill="#1e8a1e"/></svg>
<svg style="position:absolute;left:999.5px;top:1203.8px" width="6" height="6"><path d="M0 0H5L0 5Z" fill="#1e8a1e"/></svg>
<svg style="position:absolute;left:1049.5px;top:1203.8px" width="6" height="6"><path d="M0 0H5L0 5Z" fill="#1e8a1e"/></svg>
<div class="q" style="left:5px;top:428px;width:2px;height:291px;background:#a6a6a6"></div>
<div class="q" style="left:5px;top:428px;width:6px;height:2px;background:#a6a6a6"></div>
<div class="q" style="left:2px;top:719px;width:12px;height:12px;border:1px solid #8c8c8c;background:#fafafa"></div>
<div class="q" style="left:4.5px;top:724.5px;width:7.0px;height:2.0px;background:#444"></div>
<div class="q" style="left:5px;top:745px;width:2px;height:542px;background:#a6a6a6"></div>
<div class="q" style="left:5px;top:745px;width:6px;height:2px;background:#a6a6a6"></div>
<div class="q" style="left:2px;top:1285px;width:12px;height:12px;border:1px solid #8c8c8c;background:#fafafa"></div>
<div class="q" style="left:17px;top:431.5px;width:2px;height:2.0px;background:#9a9a9a"></div>
<div class="q" style="left:17px;top:443.5px;width:2px;height:2.0px;background:#9a9a9a"></div>
<div class="q" style="left:17px;top:455.5px;width:2px;height:2.0px;background:#9a9a9a"></div>
<div class="q" style="left:17px;top:461.96px;width:2px;height:2.0px;background:#9a9a9a"></div>
<div class="q" style="left:17px;top:468.42px;width:2px;height:2.0px;background:#9a9a9a"></div>
<div class="q" style="left:17px;top:480.42px;width:2px;height:2.0px;background:#9a9a9a"></div>
<div class="q" style="left:17px;top:492.42px;width:2px;height:2.0px;background:#9a9a9a"></div>
<div class="q" style="left:17px;top:498.88px;width:2px;height:2.0px;background:#9a9a9a"></div>
<div class="q" style="left:17px;top:505.34px;width:2px;height:2.0px;background:#9a9a9a"></div>
<div class="q" style="left:17px;top:517.34px;width:2px;height:2.0px;background:#9a9a9a"></div>
<div class="q" style="left:17px;top:529.34px;width:2px;height:2.0px;background:#9a9a9a"></div>
<div class="q" style="left:17px;top:535.8px;width:2px;height:2.0px;background:#9a9a9a"></div>
<div class="q" style="left:17px;top:542.26px;width:2px;height:2.0px;background:#9a9a9a"></div>
<div class="q" style="left:17px;top:554.26px;width:2px;height:2.0px;background:#9a9a9a"></div>
<div class="q" style="left:17px;top:566.26px;width:2px;height:2.0px;background:#9a9a9a"></div>
<div class="q" style="left:17px;top:572.72px;width:2px;height:2.0px;background:#9a9a9a"></div>
<div class="q" style="left:17px;top:579.18px;width:2px;height:2.0px;background:#9a9a9a"></div>
<div class="q" style="left:17px;top:591.18px;width:2px;height:2.0px;background:#9a9a9a"></div>
<div class="q" style="left:17px;top:603.18px;width:2px;height:2.0px;background:#9a9a9a"></div>
<div class="q" style="left:17px;top:609.64px;width:2px;height:2.0px;background:#9a9a9a"></div>
<div class="q" style="left:17px;top:616.1px;width:2px;height:2.0px;background:#9a9a9a"></div>
<div class="q" style="left:17px;top:628.1px;width:2px;height:2.0px;background:#9a9a9a"></div>
<div class="q" style="left:17px;top:640.1px;width:2px;height:2.0px;background:#9a9a9a"></div>
<div class="q" style="left:17px;top:652.1px;width:2px;height:2.0px;background:#9a9a9a"></div>
<div class="q" style="left:17px;top:664.1px;width:2px;height:2.0px;background:#9a9a9a"></div>
<div class="q" style="left:17px;top:676.1px;width:2px;height:2.0px;background:#9a9a9a"></div>
<div class="q" style="left:17px;top:688.1px;width:2px;height:2.0px;background:#9a9a9a"></div>
<div class="q" style="left:17px;top:700.1px;width:2px;height:2.0px;background:#9a9a9a"></div>
<div class="q" style="left:17px;top:712.1px;width:2px;height:2.0px;background:#9a9a9a"></div>
<div class="q" style="left:17px;top:748.1px;width:2px;height:2.0px;background:#9a9a9a"></div>
<div class="q" style="left:17px;top:760.1px;width:2px;height:2.0px;background:#9a9a9a"></div>
<div class="q" style="left:17px;top:772.1px;width:2px;height:2.0px;background:#9a9a9a"></div>
<div class="q" style="left:17px;top:784.1px;width:2px;height:2.0px;background:#9a9a9a"></div>
<div class="q" style="left:17px;top:796.1px;width:2px;height:2.0px;background:#9a9a9a"></div>
<div class="q" style="left:17px;top:808.1px;width:2px;height:2.0px;background:#9a9a9a"></div>
<div class="q" style="left:17px;top:820.1px;width:2px;height:2.0px;background:#9a9a9a"></div>
<div class="q" style="left:17px;top:832.1px;width:2px;height:2.0px;background:#9a9a9a"></div>
<div class="q" style="left:17px;top:844.1px;width:2px;height:2.0px;background:#9a9a9a"></div>
<div class="q" style="left:17px;top:850.56px;width:2px;height:2.0px;background:#9a9a9a"></div>
<div class="q" style="left:17px;top:857.15px;width:2px;height:2.0px;background:#9a9a9a"></div>
<div class="q" style="left:17px;top:869.15px;width:2px;height:2.0px;background:#9a9a9a"></div>
<div class="q" style="left:17px;top:881.15px;width:2px;height:2.0px;background:#9a9a9a"></div>
<div class="q" style="left:17px;top:893.15px;width:2px;height:2.0px;background:#9a9a9a"></div>
<div class="q" style="left:17px;top:905.15px;width:2px;height:2.0px;background:#9a9a9a"></div>
<div class="q" style="left:17px;top:917.15px;width:2px;height:2.0px;background:#9a9a9a"></div>
<div class="q" style="left:17px;top:929.15px;width:2px;height:2.0px;background:#9a9a9a"></div>
<div class="q" style="left:17px;top:941.15px;width:2px;height:2.0px;background:#9a9a9a"></div>
<div class="q" style="left:17px;top:953.15px;width:2px;height:2.0px;background:#9a9a9a"></div>
<div class="q" style="left:17px;top:965.15px;width:2px;height:2.0px;background:#9a9a9a"></div>
<div class="q" style="left:17px;top:971.61px;width:2px;height:2.0px;background:#9a9a9a"></div>
<div class="q" style="left:17px;top:978.2px;width:2px;height:2.0px;background:#9a9a9a"></div>
<div class="q" style="left:17px;top:990.2px;width:2px;height:2.0px;background:#9a9a9a"></div>
<div class="q" style="left:17px;top:1002.2px;width:2px;height:2.0px;background:#9a9a9a"></div>
<div class="q" style="left:17px;top:1014.2px;width:2px;height:2.0px;background:#9a9a9a"></div>
<div class="q" style="left:17px;top:1026.2px;width:2px;height:2.0px;background:#9a9a9a"></div>
<div class="q" style="left:17px;top:1038.2px;width:2px;height:2.0px;background:#9a9a9a"></div>
<div class="q" style="left:17px;top:1050.2px;width:2px;height:2.0px;background:#9a9a9a"></div>
<div class="q" style="left:17px;top:1062.2px;width:2px;height:2.0px;background:#9a9a9a"></div>
<div class="q" style="left:17px;top:1074.2px;width:2px;height:2.0px;background:#9a9a9a"></div>
<div class="q" style="left:17px;top:1086.2px;width:2px;height:2.0px;background:#9a9a9a"></div>
<div class="q" style="left:17px;top:1092.66px;width:2px;height:2.0px;background:#9a9a9a"></div>
<div class="q" style="left:17px;top:1099.25px;width:2px;height:2.0px;background:#9a9a9a"></div>
<div class="q" style="left:17px;top:1111.25px;width:2px;height:2.0px;background:#9a9a9a"></div>
<div class="q" style="left:17px;top:1123.25px;width:2px;height:2.0px;background:#9a9a9a"></div>
<div class="q" style="left:17px;top:1135.25px;width:2px;height:2.0px;background:#9a9a9a"></div>
<div class="q" style="left:17px;top:1147.25px;width:2px;height:2.0px;background:#9a9a9a"></div>
<div class="q" style="left:17px;top:1159.25px;width:2px;height:2.0px;background:#9a9a9a"></div>
<div class="q" style="left:17px;top:1171.25px;width:2px;height:2.0px;background:#9a9a9a"></div>
<div class="q" style="left:17px;top:1177.71px;width:2px;height:2.0px;background:#9a9a9a"></div>
<div class="q" style="left:17px;top:1184.3px;width:2px;height:2.0px;background:#9a9a9a"></div>
<div class="q" style="left:17px;top:1196.3px;width:2px;height:2.0px;background:#9a9a9a"></div>
<div class="q" style="left:17px;top:1208.3px;width:2px;height:2.0px;background:#9a9a9a"></div>
<div class="q" style="left:17px;top:1220.3px;width:2px;height:2.0px;background:#9a9a9a"></div>
<div class="q" style="left:17px;top:1232.3px;width:2px;height:2.0px;background:#9a9a9a"></div>
<div class="q" style="left:17px;top:1244.3px;width:2px;height:2.0px;background:#9a9a9a"></div>
<div class="q" style="left:17px;top:1256.3px;width:2px;height:2.0px;background:#9a9a9a"></div>
<div class="q" style="left:17px;top:1268.3px;width:2px;height:2.0px;background:#9a9a9a"></div>
<div class="q" style="left:17px;top:1280.3px;width:2px;height:2.0px;background:#9a9a9a"></div>
</body></html>
